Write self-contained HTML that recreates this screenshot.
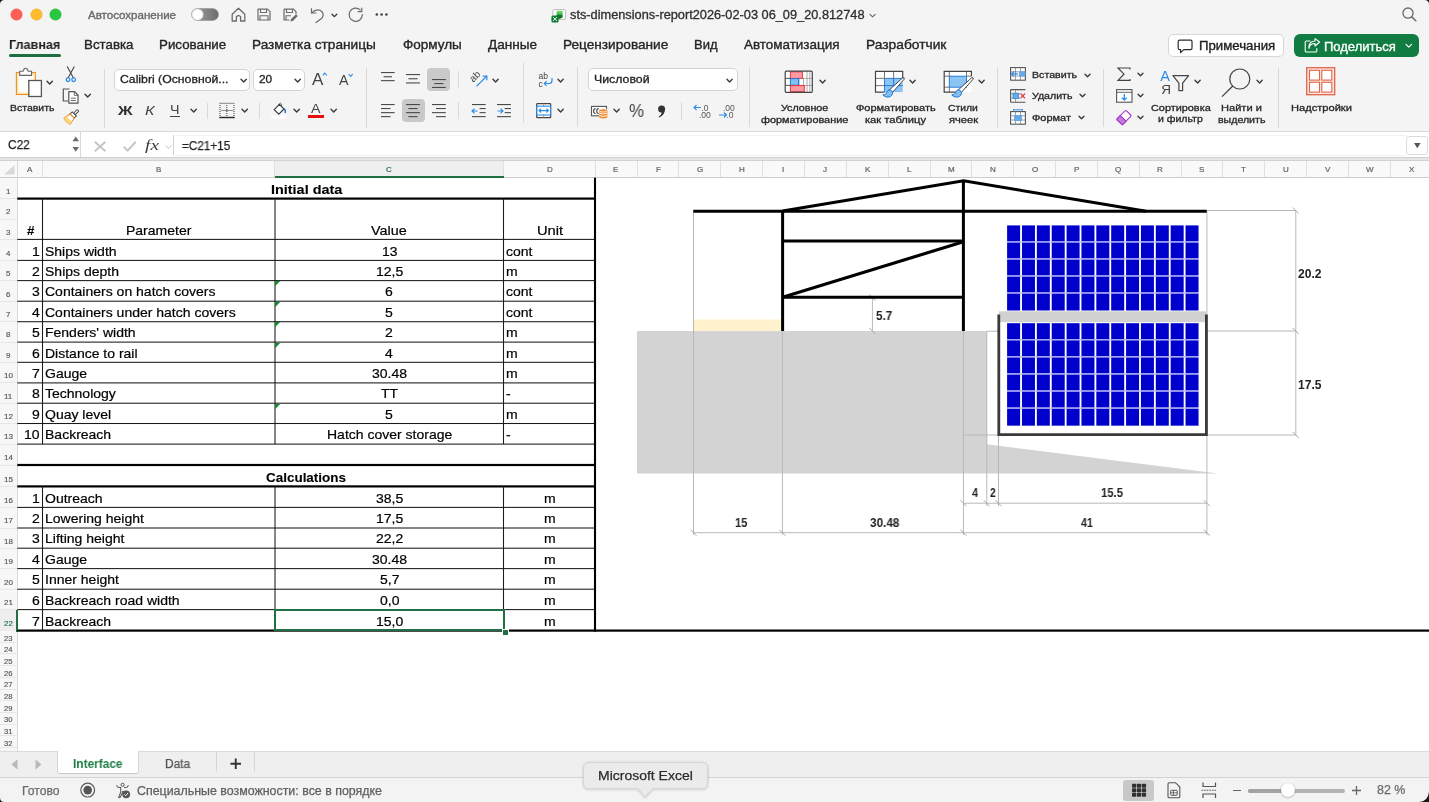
<!DOCTYPE html>
<html><head><meta charset="utf-8"><title>Excel</title>
<style>
html,body{margin:0;padding:0;}
body{width:1429px;height:802px;overflow:hidden;position:relative;background:#f4f4f4;font-family:'Liberation Sans',sans-serif;}
svg{display:block;will-change:transform;}
</style></head><body>
<div style="position:absolute;left:0.00px;top:0.00px;width:1429.00px;height:131.00px;background:#f4f4f4;"></div>
<svg style="position:absolute;left:10.00px;top:8.10px;overflow:visible;" width="13.00" height="13.00" viewBox="0 0 13.00 13.00"><circle cx="6.5" cy="6.5" r="5.7" fill="#ff5f57" stroke="#e2463f" stroke-width="0.4"/></svg>
<svg style="position:absolute;left:29.50px;top:8.10px;overflow:visible;" width="13.00" height="13.00" viewBox="0 0 13.00 13.00"><circle cx="6.5" cy="6.5" r="5.7" fill="#febc2e" stroke="#e1a116" stroke-width="0.4"/></svg>
<svg style="position:absolute;left:49.00px;top:8.10px;overflow:visible;" width="13.00" height="13.00" viewBox="0 0 13.00 13.00"><circle cx="6.5" cy="6.5" r="5.7" fill="#28c840" stroke="#14ae2a" stroke-width="0.4"/></svg>
<div style="position:absolute;left:87.50px;top:9.61px;white-space:pre;font-family:'Liberation Sans',sans-serif;font-size:10.5px;line-height:1;will-change:transform;font-weight:400;font-style:normal;color:#6a6a6a;transform:scaleX(1.0994);transform-origin:0 0;-webkit-text-stroke:0.35px #6a6a6a;z-index:5">Автосохранение</div>
<svg style="position:absolute;left:190.50px;top:8.00px;overflow:visible;" width="28.00" height="13.00" viewBox="0 0 28.00 13.00"><defs><linearGradient id="tg" x1="0" x2="1"><stop offset="0" stop-color="#a5a5a5"/><stop offset="1" stop-color="#6c6c6c"/></linearGradient></defs><rect x="0.5" y="0.5" width="27" height="12" rx="6" fill="url(#tg)" stroke="#8a8a8a" stroke-width="0.5"/><circle cx="6.6" cy="6.5" r="5.6" fill="#fff" stroke="#cfcfcf" stroke-width="0.5"/></svg>
<svg style="position:absolute;left:230.50px;top:6.50px;overflow:visible;" width="15.00" height="15.00" viewBox="0 0 15.00 15.00"><path d="M1.2 7.2 L7.5 1.2 L13.8 7.2 L13.8 14 L9.6 14 L9.6 9.6 Q7.5 7.6 5.4 9.6 L5.4 14 L1.2 14 Z" fill="none" stroke="#6b6b6b" stroke-width="1.3" stroke-linejoin="round"/></svg>
<svg style="position:absolute;left:257.00px;top:8.30px;overflow:visible;" width="14.00" height="13.00" viewBox="0 0 14.00 13.00"><path d="M1 1.2 L10.5 1.2 L13 3.7 L13 12 L1 12 Z" fill="none" stroke="#6b6b6b" stroke-width="1.2" stroke-linejoin="round"/><path d="M3.5 1.2 V4.5 H9.5 V1.2 M3 12 V7.8 H11 V12" fill="none" stroke="#6b6b6b" stroke-width="1.1"/></svg>
<svg style="position:absolute;left:283.20px;top:8.30px;overflow:visible;" width="15.00" height="14.00" viewBox="0 0 15.00 14.00"><path d="M1 1.2 L10.5 1.2 L13 3.7 L13 6 M6 12 L1 12 Z M1 1.2 V12" fill="none" stroke="#6b6b6b" stroke-width="1.2" stroke-linejoin="round"/><path d="M3.5 1.2 V4.5 H9.5 V1.2 M3 12 V7.8 H8" fill="none" stroke="#6b6b6b" stroke-width="1.1"/><path d="M7.5 13.5 L8 11 L13 6.2 L14.8 8 L9.9 12.9 Z" fill="#6b6b6b"/></svg>
<svg style="position:absolute;left:309.50px;top:6.50px;overflow:visible;" width="15.00" height="16.00" viewBox="0 0 15.00 16.00"><path d="M1.5 1.5 V6 H6" fill="none" stroke="#6b6b6b" stroke-width="1.2" stroke-linecap="round" stroke-linejoin="round"/><path d="M1.8 5.8 Q6 1.5 10.5 3.5 Q15 6.5 12 11 L6 15.5" fill="none" stroke="#6b6b6b" stroke-width="1.2" stroke-linecap="round"/></svg>
<svg style="position:absolute;left:331.30px;top:12.80px;overflow:visible;" width="6.80" height="4.80" viewBox="0 0 6.80 4.80"><path d="M1 1.20 L3.40 3.60 L5.80 1.20" fill="none" stroke="#333" stroke-width="1.30" stroke-linecap="round" stroke-linejoin="round"/></svg>
<svg style="position:absolute;left:347.50px;top:8.00px;overflow:visible;" width="16.00" height="14.00" viewBox="0 0 16.00 14.00"><path d="M14.3 6.7 A6.6 6.6 0 1 1 12.2 1.9" fill="none" stroke="#6b6b6b" stroke-width="1.2" stroke-linecap="round"/><path d="M10.1 3.7 H13.8 V0.1" fill="none" stroke="#6b6b6b" stroke-width="1.2" stroke-linecap="round" stroke-linejoin="round"/></svg>
<svg style="position:absolute;left:375.00px;top:13.00px;overflow:visible;" width="14.00" height="3.50" viewBox="0 0 14.00 3.50"><circle cx="1.8" cy="1.5" r="1.3" fill="#444"/><circle cx="6.6" cy="1.5" r="1.3" fill="#444"/><circle cx="11.4" cy="1.5" r="1.3" fill="#444"/></svg>
<svg style="position:absolute;left:0.00px;top:0.00px;overflow:visible;" width="1429.00" height="40.00" viewBox="0 0 1429.00 40.00"><defs><linearGradient id="xg" x1="0" y1="0" x2="0" y2="1"><stop offset="0" stop-color="#7be06a"/><stop offset="0.45" stop-color="#3cb84a"/><stop offset="0.55" stop-color="#0d7a2a"/><stop offset="1" stop-color="#09731f"/></linearGradient></defs><rect x="552.8" y="9.6" width="12.8" height="10" rx="1.6" fill="#fff" stroke="#b5b5b5" stroke-width="0.9"/><path d="M556.6 10.8 H562.6 V17.4 L559.6 18.9 L556.6 17.4 Z" fill="url(#xg)"/><rect x="551.4" y="15.5" width="7.2" height="7" rx="1.6" fill="#0e7a36"/><path d="M553 17.1 L557 21 M557 17.1 L553 21" stroke="#fff" stroke-width="0.9"/></svg>
<div style="position:absolute;left:570.00px;top:9.04px;white-space:pre;font-family:'Liberation Sans',sans-serif;font-size:12px;line-height:1;will-change:transform;font-weight:400;font-style:normal;color:#2f2f2f;transform:scaleX(1.0637);transform-origin:0 0;-webkit-text-stroke:0.30px #2f2f2f;z-index:5">sts-dimensions-report2026-02-03 06_09_20.812748</div>
<svg style="position:absolute;left:868.50px;top:12.70px;overflow:visible;" width="7.20" height="5.20" viewBox="0 0 7.20 5.20"><path d="M1 1.30 L3.60 3.90 L6.20 1.30" fill="none" stroke="#666" stroke-width="1.10" stroke-linecap="round" stroke-linejoin="round"/></svg>
<svg style="position:absolute;left:1400.00px;top:5.00px;overflow:visible;" width="20.00" height="20.00" viewBox="0 0 20.00 20.00"><circle cx="8" cy="8.1" r="5.1" fill="none" stroke="#6b6b6b" stroke-width="1.3"/><path d="M11.8 11.9 L15.8 15.7" stroke="#6b6b6b" stroke-width="1.5" stroke-linecap="round"/></svg>
<div style="position:absolute;left:9.20px;top:37.90px;white-space:pre;font-family:'Liberation Sans',sans-serif;font-size:13px;line-height:1;will-change:transform;font-weight:700;font-style:normal;color:#1e1e1e;transform:scaleX(0.9702);transform-origin:0 0;z-index:5">Главная</div>
<div style="position:absolute;left:84.00px;top:37.90px;white-space:pre;font-family:'Liberation Sans',sans-serif;font-size:13px;line-height:1;will-change:transform;font-weight:400;font-style:normal;color:#262626;transform:scaleX(1.0242);transform-origin:0 0;-webkit-text-stroke:0.35px #262626;z-index:5">Вставка</div>
<div style="position:absolute;left:158.70px;top:37.90px;white-space:pre;font-family:'Liberation Sans',sans-serif;font-size:13px;line-height:1;will-change:transform;font-weight:400;font-style:normal;color:#262626;transform:scaleX(1.0262);transform-origin:0 0;-webkit-text-stroke:0.35px #262626;z-index:5">Рисование</div>
<div style="position:absolute;left:252.40px;top:37.90px;white-space:pre;font-family:'Liberation Sans',sans-serif;font-size:13px;line-height:1;will-change:transform;font-weight:400;font-style:normal;color:#262626;transform:scaleX(1.0497);transform-origin:0 0;-webkit-text-stroke:0.35px #262626;z-index:5">Разметка страницы</div>
<div style="position:absolute;left:403.20px;top:37.90px;white-space:pre;font-family:'Liberation Sans',sans-serif;font-size:13px;line-height:1;will-change:transform;font-weight:400;font-style:normal;color:#262626;transform:scaleX(1.0393);transform-origin:0 0;-webkit-text-stroke:0.35px #262626;z-index:5">Формулы</div>
<div style="position:absolute;left:487.50px;top:37.90px;white-space:pre;font-family:'Liberation Sans',sans-serif;font-size:13px;line-height:1;will-change:transform;font-weight:400;font-style:normal;color:#262626;transform:scaleX(1.0432);transform-origin:0 0;-webkit-text-stroke:0.35px #262626;z-index:5">Данные</div>
<div style="position:absolute;left:562.90px;top:37.90px;white-space:pre;font-family:'Liberation Sans',sans-serif;font-size:13px;line-height:1;will-change:transform;font-weight:400;font-style:normal;color:#262626;transform:scaleX(1.0489);transform-origin:0 0;-webkit-text-stroke:0.35px #262626;z-index:5">Рецензирование</div>
<div style="position:absolute;left:694.30px;top:37.90px;white-space:pre;font-family:'Liberation Sans',sans-serif;font-size:13px;line-height:1;will-change:transform;font-weight:400;font-style:normal;color:#262626;-webkit-text-stroke:0.35px #262626;z-index:5">Вид</div>
<div style="position:absolute;left:743.70px;top:37.90px;white-space:pre;font-family:'Liberation Sans',sans-serif;font-size:13px;line-height:1;will-change:transform;font-weight:400;font-style:normal;color:#262626;transform:scaleX(1.0338);transform-origin:0 0;-webkit-text-stroke:0.35px #262626;z-index:5">Автоматизация</div>
<div style="position:absolute;left:865.60px;top:37.90px;white-space:pre;font-family:'Liberation Sans',sans-serif;font-size:13px;line-height:1;will-change:transform;font-weight:400;font-style:normal;color:#262626;transform:scaleX(1.0605);transform-origin:0 0;-webkit-text-stroke:0.35px #262626;z-index:5">Разработчик</div>
<div style="position:absolute;left:9.00px;top:54.20px;width:52.00px;height:2.80px;background:#1d6f42;border-radius:1.5px;"></div>
<div style="position:absolute;left:1168.30px;top:34.40px;width:115.40px;height:22.20px;background:#ffffff;box-sizing:border-box;border:1px solid #d6d6d6;border-radius:5px;"></div>
<svg style="position:absolute;left:1177.00px;top:39.00px;overflow:visible;" width="17.00" height="16.00" viewBox="0 0 17.00 16.00"><path d="M2.6 1.2 H13.6 Q15 1.2 15 2.6 V9.2 Q15 10.6 13.6 10.6 H6.8 L3.6 13.6 L3.6 10.6 H2.6 Q1.2 10.6 1.2 9.2 V2.6 Q1.2 1.2 2.6 1.2 Z" fill="none" stroke="#2b2b2b" stroke-width="1.2" stroke-linejoin="round"/></svg>
<div style="position:absolute;left:1199.30px;top:40.12px;white-space:pre;font-family:'Liberation Sans',sans-serif;font-size:12.5px;line-height:1;will-change:transform;font-weight:400;font-style:normal;color:#1e1e1e;transform:scaleX(1.0558);transform-origin:0 0;-webkit-text-stroke:0.35px #1e1e1e;z-index:5">Примечания</div>
<div style="position:absolute;left:1293.80px;top:34.30px;width:125.00px;height:22.70px;background:#107c41;border-radius:6px;"></div>
<svg style="position:absolute;left:1303.50px;top:38.00px;overflow:visible;" width="17.00" height="15.00" viewBox="0 0 17.00 15.00"><path d="M6 3 H2.5 Q1.2 3 1.2 4.3 V12.7 Q1.2 14 2.5 14 H11.5 Q12.8 14 12.8 12.7 V10.5" fill="none" stroke="#fff" stroke-width="1.1" stroke-linecap="round"/><path d="M5 10.5 Q5.5 5.5 11 5.5 V8 L15.6 4 L11 0.6 V3 Q4.2 3.4 5 10.5 Z" fill="none" stroke="#fff" stroke-width="1.1" stroke-linejoin="round"/></svg>
<div style="position:absolute;left:1324.30px;top:39.80px;white-space:pre;font-family:'Liberation Sans',sans-serif;font-size:13px;line-height:1;will-change:transform;font-weight:400;font-style:normal;color:#ffffff;-webkit-text-stroke:0.35px #ffffff;z-index:5">Поделиться</div>
<svg style="position:absolute;left:1404.50px;top:43.20px;overflow:visible;" width="7.60" height="5.60" viewBox="0 0 7.60 5.60"><path d="M1 1.40 L3.80 4.20 L6.60 1.40" fill="none" stroke="#ffffff" stroke-width="1.20" stroke-linecap="round" stroke-linejoin="round"/></svg>
<svg style="position:absolute;left:0.00px;top:0.00px;overflow:visible;" width="1429.00" height="200.00" viewBox="0 0 1429.00 200.00"><rect x="16.4" y="72.6" width="18.9" height="21.9" fill="#fff" stroke="#f08a24" stroke-width="1.1"/><rect x="17.6" y="73.8" width="16.5" height="19.5" fill="none" stroke="#fde3a0" stroke-width="1.3"/><path d="M19.7 75.4 V71.2 H23.2 Q23.8 68.2 25.6 68.2 Q27.5 68.2 28.1 71.2 H31.6 V75.4 Z" fill="#fff" stroke="#666" stroke-width="1.1" stroke-linejoin="round"/><rect x="28.8" y="80.5" width="12.6" height="16" fill="#fff" stroke="#555" stroke-width="1.3"/></svg>
<svg style="position:absolute;left:46.20px;top:79.50px;overflow:visible;" width="7.40" height="5.40" viewBox="0 0 7.40 5.40"><path d="M1 1.35 L3.70 4.05 L6.40 1.35" fill="none" stroke="#3a3a3a" stroke-width="1.40" stroke-linecap="round" stroke-linejoin="round"/></svg>
<div style="position:absolute;left:10.40px;top:103.16px;white-space:pre;font-family:'Liberation Sans',sans-serif;font-size:9.5px;line-height:1;will-change:transform;font-weight:400;font-style:normal;color:#262626;transform:scaleX(1.1047);transform-origin:0 0;-webkit-text-stroke:0.30px #262626;z-index:5">Вставить</div>
<svg style="position:absolute;left:64.50px;top:66.00px;overflow:visible;" width="12.00" height="16.50" viewBox="0 0 12.00 16.50"><path d="M2.2 0.5 L8.6 12.2 M9.3 0.5 L2.9 12.2" stroke="#444" stroke-width="1.1" fill="none"/><circle cx="3" cy="13.7" r="1.8" fill="#fff" stroke="#2f8ce0" stroke-width="1.3"/><circle cx="8.6" cy="13.7" r="1.8" fill="#fff" stroke="#2f8ce0" stroke-width="1.3"/></svg>
<svg style="position:absolute;left:62.00px;top:87.50px;overflow:visible;" width="17.50" height="16.00" viewBox="0 0 17.50 16.00"><path d="M7.5 1 H1.3 V13 H6" fill="none" stroke="#555" stroke-width="1.2"/><path d="M6.8 3.6 H12.6 L16 7 V15.2 H6.8 Z" fill="#fff" stroke="#555" stroke-width="1.2" stroke-linejoin="round"/><path d="M12.3 3.6 V7.3 H16 M8.8 10.2 H13.8 M8.8 12.5 H13.8" fill="none" stroke="#555" stroke-width="0.9"/></svg>
<svg style="position:absolute;left:83.80px;top:92.80px;overflow:visible;" width="7.40" height="5.40" viewBox="0 0 7.40 5.40"><path d="M1 1.35 L3.70 4.05 L6.40 1.35" fill="none" stroke="#3a3a3a" stroke-width="1.40" stroke-linecap="round" stroke-linejoin="round"/></svg>
<svg style="position:absolute;left:0.00px;top:0.00px;overflow:visible;" width="1429.00" height="200.00" viewBox="0 0 1429.00 200.00"><g transform="translate(71 117.2) rotate(45) scale(0.86)"><rect x="-1.3" y="-11.6" width="2.6" height="6.2" rx="1" fill="#fff" stroke="#3d3d3d" stroke-width="1.1"/><rect x="-3.4" y="-5.4" width="6.8" height="3.6" fill="#fff" stroke="#3d3d3d" stroke-width="1.1"/><path d="M-3.4 -1.8 H3.4 L5 6.6 Q0 8.4 -5 6.6 Z" fill="#fff" stroke="#f08a24" stroke-width="1.2" stroke-linejoin="round"/><path d="M-4.2 3.2 L4.3 3.2 L5 6.6 Q0 8.4 -5 6.6 Z" fill="#fbd77a"/></g></svg>
<div style="position:absolute;left:103.50px;top:68.50px;width:1.00px;height:59.50px;background:#d9d9d9;"></div>
<div style="position:absolute;left:113.70px;top:68.50px;width:136.50px;height:22.80px;background:#ffffff;box-sizing:border-box;border:1px solid #d4d4d4;border-radius:5px;"></div>
<div style="position:absolute;left:119.80px;top:74.27px;white-space:pre;font-family:'Liberation Sans',sans-serif;font-size:11.5px;line-height:1;will-change:transform;font-weight:400;font-style:normal;color:#1f1f1f;transform:scaleX(1.0644);transform-origin:0 0;-webkit-text-stroke:0.30px #1f1f1f;z-index:5">Calibri (Основной...</div>
<svg style="position:absolute;left:239.50px;top:77.70px;overflow:visible;" width="7.40" height="5.40" viewBox="0 0 7.40 5.40"><path d="M1 1.35 L3.70 4.05 L6.40 1.35" fill="none" stroke="#3a3a3a" stroke-width="1.40" stroke-linecap="round" stroke-linejoin="round"/></svg>
<div style="position:absolute;left:252.60px;top:68.50px;width:52.60px;height:22.80px;background:#ffffff;box-sizing:border-box;border:1px solid #d4d4d4;border-radius:5px;"></div>
<div style="position:absolute;left:258.80px;top:74.07px;white-space:pre;font-family:'Liberation Sans',sans-serif;font-size:11.5px;line-height:1;will-change:transform;font-weight:400;font-style:normal;color:#1f1f1f;transform:scaleX(1.0315);transform-origin:0 0;-webkit-text-stroke:0.30px #1f1f1f;z-index:5">20</div>
<svg style="position:absolute;left:294.30px;top:77.70px;overflow:visible;" width="7.40" height="5.40" viewBox="0 0 7.40 5.40"><path d="M1 1.35 L3.70 4.05 L6.40 1.35" fill="none" stroke="#3a3a3a" stroke-width="1.40" stroke-linecap="round" stroke-linejoin="round"/></svg>
<div style="position:absolute;left:311.50px;top:70.61px;white-space:pre;font-family:'Liberation Sans',sans-serif;font-size:17px;line-height:1;will-change:transform;font-weight:400;font-style:normal;color:#444;transform:scaleX(0.9697);transform-origin:0 0;z-index:5">A</div>
<svg style="position:absolute;left:322.00px;top:72.00px;overflow:visible;" width="5.50" height="4.00" viewBox="0 0 5.50 4.00"><path d="M0.7 3.3 L2.75 1 L4.8 3.3" fill="none" stroke="#2b8ce6" stroke-width="1.1"/></svg>
<div style="position:absolute;left:339.00px;top:73.35px;white-space:pre;font-family:'Liberation Sans',sans-serif;font-size:14px;line-height:1;will-change:transform;font-weight:400;font-style:normal;color:#444;transform:scaleX(1.0167);transform-origin:0 0;z-index:5">A</div>
<svg style="position:absolute;left:348.00px;top:72.50px;overflow:visible;" width="5.50" height="4.00" viewBox="0 0 5.50 4.00"><path d="M0.7 1 L2.75 3.3 L4.8 1" fill="none" stroke="#2b8ce6" stroke-width="1.1"/></svg>
<div style="position:absolute;left:365.80px;top:68.00px;width:1.00px;height:59.50px;background:#d9d9d9;"></div>
<div style="position:absolute;left:117.50px;top:103.57px;white-space:pre;font-family:'Liberation Sans',sans-serif;font-size:13.5px;line-height:1;will-change:transform;font-weight:700;font-style:normal;color:#2d2d2d;transform:scaleX(1.1882);transform-origin:0 0;z-index:5">Ж</div>
<div style="position:absolute;left:145.00px;top:103.57px;white-space:pre;font-family:'Liberation Sans',sans-serif;font-size:13.5px;line-height:1;will-change:transform;font-weight:400;font-style:italic;color:#444;transform:scaleX(1.1922);transform-origin:0 0;z-index:5">К</div>
<div style="position:absolute;left:170.30px;top:103.62px;white-space:pre;font-family:'Liberation Sans',sans-serif;font-size:12.5px;line-height:1;will-change:transform;font-weight:400;font-style:normal;color:#444;transform:scaleX(1.1386);transform-origin:0 0;z-index:5">Ч</div>
<div style="position:absolute;left:170.20px;top:116.30px;width:10.30px;height:1.10px;background:#444;"></div>
<svg style="position:absolute;left:189.60px;top:108.30px;overflow:visible;" width="7.40" height="5.40" viewBox="0 0 7.40 5.40"><path d="M1 1.35 L3.70 4.05 L6.40 1.35" fill="none" stroke="#3a3a3a" stroke-width="1.40" stroke-linecap="round" stroke-linejoin="round"/></svg>
<div style="position:absolute;left:206.80px;top:102.60px;width:1.00px;height:16.40px;background:#d9d9d9;"></div>
<svg style="position:absolute;left:0.00px;top:0.00px;overflow:visible;" width="1429.00" height="200.00" viewBox="0 0 1429.00 200.00"><rect x="219.2" y="102.8" width="15.6" height="1" fill="#888"/><rect x="219.2" y="105.0" width="1.5" height="0.9" fill="#666"/><rect x="219.2" y="107.0" width="1.5" height="0.9" fill="#666"/><rect x="219.2" y="109.0" width="1.5" height="0.9" fill="#666"/><rect x="219.2" y="111.0" width="1.5" height="0.9" fill="#666"/><rect x="219.2" y="113.0" width="1.5" height="0.9" fill="#666"/><rect x="219.2" y="115.0" width="1.5" height="0.9" fill="#666"/><rect x="225.9" y="105.0" width="1.5" height="0.9" fill="#666"/><rect x="225.9" y="107.0" width="1.5" height="0.9" fill="#666"/><rect x="225.9" y="109.0" width="1.5" height="0.9" fill="#666"/><rect x="225.9" y="111.0" width="1.5" height="0.9" fill="#666"/><rect x="225.9" y="113.0" width="1.5" height="0.9" fill="#666"/><rect x="225.9" y="115.0" width="1.5" height="0.9" fill="#666"/><rect x="233.2" y="105.0" width="1.5" height="0.9" fill="#666"/><rect x="233.2" y="107.0" width="1.5" height="0.9" fill="#666"/><rect x="233.2" y="109.0" width="1.5" height="0.9" fill="#666"/><rect x="233.2" y="111.0" width="1.5" height="0.9" fill="#666"/><rect x="233.2" y="113.0" width="1.5" height="0.9" fill="#666"/><rect x="233.2" y="115.0" width="1.5" height="0.9" fill="#666"/><rect x="221" y="110" width="12" height="0.9" fill="#888"/><rect x="226" y="109.2" width="1.5" height="2.5" fill="#777"/><rect x="219.2" y="116.7" width="15.6" height="1.5" rx="0.5" fill="#2d2d2d"/></svg>
<svg style="position:absolute;left:241.30px;top:108.30px;overflow:visible;" width="7.40" height="5.40" viewBox="0 0 7.40 5.40"><path d="M1 1.35 L3.70 4.05 L6.40 1.35" fill="none" stroke="#3a3a3a" stroke-width="1.40" stroke-linecap="round" stroke-linejoin="round"/></svg>
<div style="position:absolute;left:258.80px;top:102.60px;width:1.00px;height:16.40px;background:#d9d9d9;"></div>
<svg style="position:absolute;left:0.00px;top:0.00px;overflow:visible;" width="1429.00" height="200.00" viewBox="0 0 1429.00 200.00"><path d="M274.2 109.6 L279.4 104.4 L284 109 L278.8 114.2 Z" fill="#fff" stroke="#333" stroke-width="1.1" stroke-linejoin="round"/><path d="M278.1 105.7 L279.6 103.5 Q280.6 102.6 281.2 103.8 L281.6 107" fill="none" stroke="#555" stroke-width="0.9"/><path d="M283.6 108.6 Q285.6 109 285.3 112.6" fill="none" stroke="#1b6fd0" stroke-width="1.4" stroke-linecap="round"/><rect x="271.2" y="115.4" width="15.2" height="3" fill="#ffffff"/></svg>
<svg style="position:absolute;left:292.60px;top:108.30px;overflow:visible;" width="7.40" height="5.40" viewBox="0 0 7.40 5.40"><path d="M1 1.35 L3.70 4.05 L6.40 1.35" fill="none" stroke="#3a3a3a" stroke-width="1.40" stroke-linecap="round" stroke-linejoin="round"/></svg>
<div style="position:absolute;left:311.20px;top:102.17px;white-space:pre;font-family:'Liberation Sans',sans-serif;font-size:13.5px;line-height:1;will-change:transform;font-weight:400;font-style:normal;color:#444;transform:scaleX(1.0537);transform-origin:0 0;z-index:5">A</div>
<div style="position:absolute;left:308.00px;top:115.10px;width:15.50px;height:3.40px;background:#e8100f;"></div>
<svg style="position:absolute;left:329.50px;top:108.30px;overflow:visible;" width="7.40" height="5.40" viewBox="0 0 7.40 5.40"><path d="M1 1.35 L3.70 4.05 L6.40 1.35" fill="none" stroke="#3a3a3a" stroke-width="1.40" stroke-linecap="round" stroke-linejoin="round"/></svg>
<svg style="position:absolute;left:381.00px;top:71.65px;overflow:visible;" width="13.70" height="9.20" viewBox="0 0 13.70 9.20"><rect x="0.00" y="0.00" width="13.70" height="1.1" fill="#4a4a4a"/><rect x="2.60" y="4.20" width="8.40" height="1.1" fill="#4a4a4a"/><rect x="0.00" y="8.10" width="13.70" height="1.1" fill="#4a4a4a"/></svg>
<svg style="position:absolute;left:406.20px;top:74.45px;overflow:visible;" width="14.00" height="9.50" viewBox="0 0 14.00 9.50"><rect x="0.00" y="0.00" width="14.00" height="1.1" fill="#4a4a4a"/><rect x="2.40" y="4.20" width="9.20" height="1.1" fill="#4a4a4a"/><rect x="0.00" y="8.40" width="14.00" height="1.1" fill="#4a4a4a"/></svg>
<div style="position:absolute;left:426.70px;top:68.20px;width:23.30px;height:23.30px;background:#c9c9c9;border-radius:4px;"></div>
<svg style="position:absolute;left:431.60px;top:78.65px;overflow:visible;" width="13.80" height="9.00" viewBox="0 0 13.80 9.00"><rect x="0.00" y="0.00" width="13.80" height="1.1" fill="#4a4a4a"/><rect x="2.40" y="4.00" width="9.00" height="1.1" fill="#4a4a4a"/><rect x="0.00" y="7.90" width="13.80" height="1.1" fill="#4a4a4a"/></svg>
<div style="position:absolute;left:458.00px;top:71.30px;width:1.00px;height:16.70px;background:#d9d9d9;"></div>
<svg style="position:absolute;left:469.50px;top:70.00px;overflow:visible;" width="18.00" height="18.00" viewBox="0 0 18.00 18.00"><text x="0" y="0" transform="translate(3.2 12.8) rotate(-45)" font-family="Liberation Sans" font-size="10" fill="#444">ab</text><path d="M6.5 16.3 L16.8 6" stroke="#2b8ce6" stroke-width="1.2"/><path d="M12.8 6.2 H16.8 V10.2" fill="none" stroke="#2b8ce6" stroke-width="1.2"/></svg>
<svg style="position:absolute;left:492.20px;top:77.60px;overflow:visible;" width="7.20" height="5.20" viewBox="0 0 7.20 5.20"><path d="M1 1.30 L3.60 3.90 L6.20 1.30" fill="none" stroke="#3a3a3a" stroke-width="1.40" stroke-linecap="round" stroke-linejoin="round"/></svg>
<svg style="position:absolute;left:381.00px;top:103.85px;overflow:visible;" width="13.70" height="13.20" viewBox="0 0 13.70 13.20"><rect x="0.00" y="0.00" width="13.70" height="1.1" fill="#4a4a4a"/><rect x="0.00" y="4.00" width="9.50" height="1.1" fill="#4a4a4a"/><rect x="0.00" y="8.10" width="13.70" height="1.1" fill="#4a4a4a"/><rect x="0.00" y="12.10" width="9.50" height="1.1" fill="#4a4a4a"/></svg>
<div style="position:absolute;left:401.50px;top:99.20px;width:23.10px;height:23.10px;background:#c9c9c9;border-radius:4px;"></div>
<svg style="position:absolute;left:406.20px;top:103.85px;overflow:visible;" width="14.00" height="13.20" viewBox="0 0 14.00 13.20"><rect x="0.00" y="0.00" width="14.00" height="1.1" fill="#4a4a4a"/><rect x="2.40" y="4.00" width="9.20" height="1.1" fill="#4a4a4a"/><rect x="0.00" y="8.10" width="14.00" height="1.1" fill="#4a4a4a"/><rect x="2.40" y="12.10" width="9.20" height="1.1" fill="#4a4a4a"/></svg>
<svg style="position:absolute;left:431.60px;top:103.85px;overflow:visible;" width="13.80" height="13.20" viewBox="0 0 13.80 13.20"><rect x="0.00" y="0.00" width="13.80" height="1.1" fill="#4a4a4a"/><rect x="4.00" y="4.00" width="9.80" height="1.1" fill="#4a4a4a"/><rect x="0.00" y="8.10" width="13.80" height="1.1" fill="#4a4a4a"/><rect x="4.00" y="12.10" width="9.80" height="1.1" fill="#4a4a4a"/></svg>
<div style="position:absolute;left:458.00px;top:102.30px;width:1.00px;height:16.80px;background:#d9d9d9;"></div>
<svg style="position:absolute;left:471.60px;top:103.85px;overflow:visible;" width="13.70" height="13.20" viewBox="0 0 13.70 13.20"><rect x="0.00" y="0.00" width="13.70" height="1.1" fill="#4a4a4a"/><rect x="7.60" y="4.00" width="6.10" height="1.1" fill="#4a4a4a"/><rect x="7.60" y="8.10" width="6.10" height="1.1" fill="#4a4a4a"/><rect x="0.00" y="12.10" width="13.70" height="1.1" fill="#4a4a4a"/></svg>
<svg style="position:absolute;left:471.00px;top:107.50px;overflow:visible;" width="7.00" height="6.00" viewBox="0 0 7.00 6.00"><path d="M6.5 3 H1 M3.5 0.6 L1 3 L3.5 5.4" fill="none" stroke="#2b8ce6" stroke-width="1.2"/></svg>
<svg style="position:absolute;left:496.80px;top:103.85px;overflow:visible;" width="13.90" height="13.20" viewBox="0 0 13.90 13.20"><rect x="0.00" y="0.00" width="13.90" height="1.1" fill="#4a4a4a"/><rect x="7.70" y="4.00" width="6.20" height="1.1" fill="#4a4a4a"/><rect x="7.70" y="8.10" width="6.20" height="1.1" fill="#4a4a4a"/><rect x="0.00" y="12.10" width="13.90" height="1.1" fill="#4a4a4a"/></svg>
<svg style="position:absolute;left:496.50px;top:107.50px;overflow:visible;" width="7.00" height="6.00" viewBox="0 0 7.00 6.00"><path d="M0.5 3 H6 M3.5 0.6 L6 3 L3.5 5.4" fill="none" stroke="#2b8ce6" stroke-width="1.2"/></svg>
<div style="position:absolute;left:523.40px;top:63.20px;width:1.00px;height:59.80px;background:#d9d9d9;"></div>
<svg style="position:absolute;left:537.50px;top:72.00px;overflow:visible;" width="15.00" height="16.00" viewBox="0 0 15.00 16.00"><text x="0.5" y="7" font-family="Liberation Sans" font-size="8.5" fill="#444">ab</text><text x="0.5" y="14.5" font-family="Liberation Sans" font-size="8.5" fill="#444">c</text><path d="M6.5 11.5 H11 Q14 11.5 14 8.5 V6" fill="none" stroke="#2b8ce6" stroke-width="1.2"/><path d="M8.6 9.2 L6.3 11.5 L8.6 13.8" fill="none" stroke="#2b8ce6" stroke-width="1.2"/></svg>
<svg style="position:absolute;left:557.40px;top:77.60px;overflow:visible;" width="7.20" height="5.20" viewBox="0 0 7.20 5.20"><path d="M1 1.30 L3.60 3.90 L6.20 1.30" fill="none" stroke="#3a3a3a" stroke-width="1.40" stroke-linecap="round" stroke-linejoin="round"/></svg>
<svg style="position:absolute;left:535.50px;top:102.80px;overflow:visible;" width="15.50" height="15.50" viewBox="0 0 15.50 15.50"><rect x="0.7" y="0.7" width="14" height="14" rx="0.8" fill="#fff" stroke="#444" stroke-width="1.2"/><rect x="0.9" y="3.2" width="13.6" height="8.8" fill="#fff" stroke="#2b8ce6" stroke-width="1.1"/><path d="M7.7 0.7 V3.2 M7.7 12 V14.7" stroke="#888" stroke-width="0.8"/><path d="M3 7.6 H12.4 M5 5.7 L3 7.6 L5 9.5 M10.4 5.7 L12.4 7.6 L10.4 9.5" fill="none" stroke="#2b8ce6" stroke-width="1.1"/></svg>
<svg style="position:absolute;left:557.40px;top:108.40px;overflow:visible;" width="7.20" height="5.20" viewBox="0 0 7.20 5.20"><path d="M1 1.30 L3.60 3.90 L6.20 1.30" fill="none" stroke="#3a3a3a" stroke-width="1.40" stroke-linecap="round" stroke-linejoin="round"/></svg>
<div style="position:absolute;left:576.90px;top:67.40px;width:1.00px;height:59.90px;background:#d9d9d9;"></div>
<div style="position:absolute;left:587.70px;top:68.00px;width:150.70px;height:23.20px;background:#ffffff;box-sizing:border-box;border:1px solid #d4d4d4;border-radius:5px;"></div>
<div style="position:absolute;left:593.60px;top:74.47px;white-space:pre;font-family:'Liberation Sans',sans-serif;font-size:11.5px;line-height:1;will-change:transform;font-weight:400;font-style:normal;color:#1f1f1f;transform:scaleX(1.0718);transform-origin:0 0;-webkit-text-stroke:0.30px #1f1f1f;z-index:5">Числовой</div>
<svg style="position:absolute;left:726.40px;top:77.60px;overflow:visible;" width="7.20" height="5.20" viewBox="0 0 7.20 5.20"><path d="M1 1.30 L3.60 3.90 L6.20 1.30" fill="none" stroke="#3a3a3a" stroke-width="1.40" stroke-linecap="round" stroke-linejoin="round"/></svg>
<svg style="position:absolute;left:0.00px;top:0.00px;overflow:visible;" width="1429.00" height="200.00" viewBox="0 0 1429.00 200.00"><rect x="591.5" y="106.4" width="15" height="9.4" fill="#fff" stroke="#555" stroke-width="1.1"/><path d="M595.5 108.6 Q593.6 108.6 593.6 111.1 Q593.6 113.6 595.5 113.6 M598.6 108.6 Q596.7 108.6 596.7 111.1 Q596.7 113.6 598.6 113.6" fill="none" stroke="#444" stroke-width="1.1"/><path d="M599 110.3 H607.4 V117.6 Q603.2 119.6 599 117.6 Z" fill="#f28a2e"/><ellipse cx="603.2" cy="110.4" rx="4.2" ry="1.6" fill="#f28a2e" stroke="#fff" stroke-width="0.8"/><path d="M599 113 Q603.2 115 607.4 113 M599 115.5 Q603.2 117.5 607.4 115.5" fill="none" stroke="#fff" stroke-width="0.9"/></svg>
<svg style="position:absolute;left:613.10px;top:108.40px;overflow:visible;" width="7.20" height="5.20" viewBox="0 0 7.20 5.20"><path d="M1 1.30 L3.60 3.90 L6.20 1.30" fill="none" stroke="#3a3a3a" stroke-width="1.40" stroke-linecap="round" stroke-linejoin="round"/></svg>
<div style="position:absolute;left:628.50px;top:102.99px;white-space:pre;font-family:'Liberation Sans',sans-serif;font-size:17.5px;line-height:1;will-change:transform;font-weight:400;font-style:normal;color:#444;transform:scaleX(0.9639);transform-origin:0 0;z-index:5">%</div>
<svg style="position:absolute;left:657.00px;top:104.50px;overflow:visible;" width="9.50" height="13.00" viewBox="0 0 9.50 13.00"><circle cx="4.6" cy="3.9" r="3.5" fill="#333"/><path d="M7.6 4.5 Q8.2 9.8 2.2 12.6 L1.8 11.6 Q5 9.5 4.6 6.8 Z" fill="#333"/></svg>
<div style="position:absolute;left:680.80px;top:102.00px;width:1.00px;height:18.00px;background:#d9d9d9;"></div>
<svg style="position:absolute;left:692.80px;top:102.50px;overflow:visible;" width="17.00" height="16.00" viewBox="0 0 17.00 16.00"><text x="8.5" y="7.5" font-family="Liberation Sans" font-size="8.5" fill="#555">.0</text><text x="6" y="15" font-family="Liberation Sans" font-size="8.5" fill="#555">.00</text><path d="M8 4.5 H1 M3.5 2 L1 4.5 L3.5 7" fill="none" stroke="#2b8ce6" stroke-width="1.1"/></svg>
<svg style="position:absolute;left:718.00px;top:102.50px;overflow:visible;" width="17.00" height="16.00" viewBox="0 0 17.00 16.00"><text x="5" y="7.5" font-family="Liberation Sans" font-size="8.5" fill="#555">.00</text><text x="8.5" y="15" font-family="Liberation Sans" font-size="8.5" fill="#555">.0</text><path d="M1 12 H8.5 M6 9.5 L8.5 12 L6 14.5" fill="none" stroke="#2b8ce6" stroke-width="1.1"/></svg>
<div style="position:absolute;left:748.50px;top:67.40px;width:1.00px;height:59.90px;background:#d9d9d9;"></div>
<svg style="position:absolute;left:0.00px;top:0.00px;overflow:visible;" width="1429.00" height="200.00" viewBox="0 0 1429.00 200.00"><rect x="785.2" y="71.2" width="27.1" height="21.1" fill="#fff"/><path d="M785.2 78.4 H812.3 M785.2 85.4 H812.3 M807 71.2 V92.3 M809.8 71.2 V92.3 M799 78.4 V85.4 M803.5 78.4 V85.4" stroke="#8a8a8a" stroke-width="0.7"/><rect x="790.4" y="71.8" width="12" height="6.6" fill="#ff9aa3" stroke="#e8323c" stroke-width="1"/><rect x="790.4" y="78.6" width="8.2" height="6.6" fill="#80c0f2" stroke="#2277d8" stroke-width="1"/><rect x="790.4" y="85.6" width="13.9" height="6.1" fill="#ff9aa3" stroke="#e8323c" stroke-width="1"/><rect x="785.2" y="71.2" width="27.1" height="21.1" rx="1" fill="none" stroke="#444" stroke-width="1.2"/><path d="M785.2 78.4 H790.4 M785.2 85.4 H790.4" stroke="#555" stroke-width="0.9"/></svg>
<svg style="position:absolute;left:818.70px;top:79.00px;overflow:visible;" width="7.20" height="5.20" viewBox="0 0 7.20 5.20"><path d="M1 1.30 L3.60 3.90 L6.20 1.30" fill="none" stroke="#3a3a3a" stroke-width="1.40" stroke-linecap="round" stroke-linejoin="round"/></svg>
<div style="position:absolute;left:781.00px;top:103.26px;white-space:pre;font-family:'Liberation Sans',sans-serif;font-size:9.5px;line-height:1;will-change:transform;font-weight:400;font-style:normal;color:#262626;transform:scaleX(1.1274);transform-origin:0 0;-webkit-text-stroke:0.30px #262626;z-index:5">Условное</div>
<div style="position:absolute;left:761.00px;top:115.06px;white-space:pre;font-family:'Liberation Sans',sans-serif;font-size:9.5px;line-height:1;will-change:transform;font-weight:400;font-style:normal;color:#262626;transform:scaleX(1.1444);transform-origin:0 0;-webkit-text-stroke:0.30px #262626;z-index:5">форматирование</div>
<svg style="position:absolute;left:0.00px;top:0.00px;overflow:visible;" width="1429.00" height="200.00" viewBox="0 0 1429.00 200.00"><rect x="875.5" y="71.3" width="27.2" height="20.8" fill="#fff"/><rect x="884.5" y="78.4" width="18.2" height="13.7" fill="#8cc4f4"/><path d="M884.5 92.1 V78.4 H902.7 M893.6 78.4 V92.1 M884.5 85.6 H902.7" fill="none" stroke="#1a73d9" stroke-width="0.9"/><path d="M875.5 78.4 H884.5 M875.5 85.6 H884.5 M884.5 71.3 V78.4 M893.6 71.3 V78.4" stroke="#666" stroke-width="0.9"/><path d="M902.7 78.4 V71.3 H875.5 V92.1 H884.5" fill="none" stroke="#444" stroke-width="1.2"/><path d="M888.60 90.60 L902.60 77.90 Q904.80 77.00 904.20 79.20 L891.60 93.40 Z" fill="#fff" stroke="#333" stroke-width="0.9" stroke-linejoin="round"/><path d="M889.80 89.90 C893.60 90.60 893.40 95.60 889.60 96.80 C886.80 97.60 884.40 96.60 882.90 94.90 C885.30 95.00 886.30 93.60 886.80 92.20 C887.50 90.40 888.60 89.70 889.80 89.90 Z" fill="#85bff2" stroke="#1a73d9" stroke-width="1" stroke-linejoin="round"/></svg>
<svg style="position:absolute;left:908.80px;top:79.00px;overflow:visible;" width="7.20" height="5.20" viewBox="0 0 7.20 5.20"><path d="M1 1.30 L3.60 3.90 L6.20 1.30" fill="none" stroke="#3a3a3a" stroke-width="1.40" stroke-linecap="round" stroke-linejoin="round"/></svg>
<div style="position:absolute;left:856.00px;top:103.26px;white-space:pre;font-family:'Liberation Sans',sans-serif;font-size:9.5px;line-height:1;will-change:transform;font-weight:400;font-style:normal;color:#262626;transform:scaleX(1.1561);transform-origin:0 0;-webkit-text-stroke:0.30px #262626;z-index:5">Форматировать</div>
<div style="position:absolute;left:865.00px;top:115.06px;white-space:pre;font-family:'Liberation Sans',sans-serif;font-size:9.5px;line-height:1;will-change:transform;font-weight:400;font-style:normal;color:#262626;transform:scaleX(1.1724);transform-origin:0 0;-webkit-text-stroke:0.30px #262626;z-index:5">как таблицу</div>
<svg style="position:absolute;left:0.00px;top:0.00px;overflow:visible;" width="1429.00" height="200.00" viewBox="0 0 1429.00 200.00"><rect x="944.2" y="71.3" width="27.2" height="20.8" fill="#fff"/><rect x="949.3" y="76.2" width="17.2" height="11" fill="#8cc4f4" stroke="#1a73d9" stroke-width="0.9"/><path d="M944.2 76.2 H949.3 M966.5 76.2 H971.4 M944.2 87.2 H949.3 M949.3 71.3 V76.2 M966.5 71.3 V76.2 M949.3 87.2 V92.1" stroke="#666" stroke-width="0.9"/><path d="M971.4 76.2 V71.3 H944.2 V92.1 H957" fill="none" stroke="#444" stroke-width="1.2"/><path d="M957.50 90.60 L971.50 77.90 Q973.70 77.00 973.10 79.20 L960.50 93.40 Z" fill="#fff" stroke="#333" stroke-width="0.9" stroke-linejoin="round"/><path d="M958.70 89.90 C962.50 90.60 962.30 95.60 958.50 96.80 C955.70 97.60 953.30 96.60 951.80 94.90 C954.20 95.00 955.20 93.60 955.70 92.20 C956.40 90.40 957.50 89.70 958.70 89.90 Z" fill="#85bff2" stroke="#1a73d9" stroke-width="1" stroke-linejoin="round"/></svg>
<svg style="position:absolute;left:977.90px;top:79.00px;overflow:visible;" width="7.20" height="5.20" viewBox="0 0 7.20 5.20"><path d="M1 1.30 L3.60 3.90 L6.20 1.30" fill="none" stroke="#3a3a3a" stroke-width="1.40" stroke-linecap="round" stroke-linejoin="round"/></svg>
<div style="position:absolute;left:948.40px;top:103.26px;white-space:pre;font-family:'Liberation Sans',sans-serif;font-size:9.5px;line-height:1;will-change:transform;font-weight:400;font-style:normal;color:#262626;transform:scaleX(1.0922);transform-origin:0 0;-webkit-text-stroke:0.30px #262626;z-index:5">Стили</div>
<div style="position:absolute;left:948.80px;top:115.06px;white-space:pre;font-family:'Liberation Sans',sans-serif;font-size:9.5px;line-height:1;will-change:transform;font-weight:400;font-style:normal;color:#262626;transform:scaleX(1.1761);transform-origin:0 0;-webkit-text-stroke:0.30px #262626;z-index:5">ячеек</div>
<div style="position:absolute;left:997.00px;top:68.00px;width:1.00px;height:59.50px;background:#d9d9d9;"></div>
<svg style="position:absolute;left:1010.00px;top:67.20px;overflow:visible;" width="16.00" height="14.00" viewBox="0 0 16.00 14.00"><rect x="0.6" y="0.6" width="14.8" height="12.6" fill="#fff" stroke="#555" stroke-width="1.1"/><path d="M0.6 4.8 H15.4 M0.6 9 H15.4 M5.5 0.6 V13.2 M10.5 0.6 V13.2" stroke="#777" stroke-width="0.7"/><rect x="9" y="4.2" width="6.4" height="5.4" fill="#6aa9e6"/><path d="M8 6.9 H1.5 M4 4.5 L1.5 6.9 L4 9.3" fill="none" stroke="#2b8ce6" stroke-width="1.2"/></svg>
<div style="position:absolute;left:1032.30px;top:70.46px;white-space:pre;font-family:'Liberation Sans',sans-serif;font-size:9.5px;line-height:1;will-change:transform;font-weight:400;font-style:normal;color:#262626;transform:scaleX(1.1196);transform-origin:0 0;-webkit-text-stroke:0.30px #262626;z-index:5">Вставить</div>
<svg style="position:absolute;left:1083.50px;top:72.50px;overflow:visible;" width="7.00" height="5.00" viewBox="0 0 7.00 5.00"><path d="M1 1.25 L3.50 3.75 L6.00 1.25" fill="none" stroke="#3a3a3a" stroke-width="1.40" stroke-linecap="round" stroke-linejoin="round"/></svg>
<svg style="position:absolute;left:1010.00px;top:88.50px;overflow:visible;" width="16.00" height="14.00" viewBox="0 0 16.00 14.00"><path d="M0.6 0.6 H15.4 M0.6 13.2 H15.4 M0.6 0.6 V13.2" fill="none" stroke="#555" stroke-width="1.1"/><path d="M0.6 4.8 H10 M0.6 9 H10 M5.5 0.6 V13.2" stroke="#777" stroke-width="0.7"/><rect x="3" y="4.2" width="5.4" height="5.4" fill="#6aa9e6" stroke="#2b8ce6" stroke-width="0.8"/><path d="M10.5 4.5 L15 9.3 M15 4.5 L10.5 9.3" stroke="#e03a3a" stroke-width="1.2"/></svg>
<div style="position:absolute;left:1032.30px;top:91.26px;white-space:pre;font-family:'Liberation Sans',sans-serif;font-size:9.5px;line-height:1;will-change:transform;font-weight:400;font-style:normal;color:#262626;transform:scaleX(1.1163);transform-origin:0 0;-webkit-text-stroke:0.30px #262626;z-index:5">Удалить</div>
<svg style="position:absolute;left:1078.50px;top:93.00px;overflow:visible;" width="7.00" height="5.00" viewBox="0 0 7.00 5.00"><path d="M1 1.25 L3.50 3.75 L6.00 1.25" fill="none" stroke="#3a3a3a" stroke-width="1.40" stroke-linecap="round" stroke-linejoin="round"/></svg>
<svg style="position:absolute;left:1010.00px;top:108.50px;overflow:visible;" width="16.00" height="16.00" viewBox="0 0 16.00 16.00"><rect x="0.6" y="2.6" width="14.8" height="12.6" fill="#fff" stroke="#555" stroke-width="1.1"/><path d="M0.6 6.8 H15.4 M0.6 11 H15.4 M5.5 2.6 V15.2 M10.5 2.6 V15.2" stroke="#777" stroke-width="0.7"/><rect x="4" y="6" width="8" height="6" fill="#6aa9e6"/><path d="M3.5 0.8 H12.5 M3.5 0 V1.6 M12.5 0 V1.6" stroke="#2b8ce6" stroke-width="1"/></svg>
<div style="position:absolute;left:1032.30px;top:112.86px;white-space:pre;font-family:'Liberation Sans',sans-serif;font-size:9.5px;line-height:1;will-change:transform;font-weight:400;font-style:normal;color:#262626;transform:scaleX(1.1526);transform-origin:0 0;-webkit-text-stroke:0.30px #262626;z-index:5">Формат</div>
<svg style="position:absolute;left:1077.70px;top:114.50px;overflow:visible;" width="7.00" height="5.00" viewBox="0 0 7.00 5.00"><path d="M1 1.25 L3.50 3.75 L6.00 1.25" fill="none" stroke="#3a3a3a" stroke-width="1.40" stroke-linecap="round" stroke-linejoin="round"/></svg>
<div style="position:absolute;left:1103.00px;top:68.80px;width:1.00px;height:58.50px;background:#d9d9d9;"></div>
<svg style="position:absolute;left:1117.00px;top:67.00px;overflow:visible;" width="14.00" height="14.50" viewBox="0 0 14.00 14.50"><path d="M13 2.5 V1 H1 L7 7.2 L1 13.4 H13 V11.9" fill="none" stroke="#444" stroke-width="1.2" stroke-linejoin="miter"/></svg>
<svg style="position:absolute;left:1136.50px;top:72.00px;overflow:visible;" width="7.00" height="5.00" viewBox="0 0 7.00 5.00"><path d="M1 1.25 L3.50 3.75 L6.00 1.25" fill="none" stroke="#3a3a3a" stroke-width="1.40" stroke-linecap="round" stroke-linejoin="round"/></svg>
<svg style="position:absolute;left:1115.50px;top:88.50px;overflow:visible;" width="17.00" height="14.00" viewBox="0 0 17.00 14.00"><rect x="0.6" y="0.6" width="15.4" height="12.6" fill="#fff" stroke="#555" stroke-width="1.1"/><path d="M0.6 3.3 H16" stroke="#555" stroke-width="0.9"/><path d="M8.3 5 V11 M5.8 8.6 L8.3 11 L10.8 8.6" fill="none" stroke="#2b8ce6" stroke-width="1.3"/></svg>
<svg style="position:absolute;left:1136.50px;top:93.00px;overflow:visible;" width="7.00" height="5.00" viewBox="0 0 7.00 5.00"><path d="M1 1.25 L3.50 3.75 L6.00 1.25" fill="none" stroke="#3a3a3a" stroke-width="1.40" stroke-linecap="round" stroke-linejoin="round"/></svg>
<svg style="position:absolute;left:0.00px;top:0.00px;overflow:visible;" width="1429.00" height="200.00" viewBox="0 0 1429.00 200.00"><path d="M1117.2 118.6 L1125.1 110.9 Q1125.9 110.2 1126.6 110.9 L1130.7 115 Q1131.4 115.7 1130.7 116.5 L1123.1 124.2 Q1122.4 124.9 1121.6 124.2 L1117.2 119.9 Q1116.6 119.2 1117.2 118.6 Z" fill="#fff" stroke="#a43bc4" stroke-width="1.1"/><path d="M1117.2 118.6 L1120.3 115.6 L1126.1 121.3 L1123.1 124.2 Q1122.4 124.9 1121.6 124.2 L1117.2 119.9 Q1116.6 119.2 1117.2 118.6 Z" fill="#c57bdc" stroke="#a43bc4" stroke-width="1.1"/></svg>
<svg style="position:absolute;left:1136.50px;top:114.50px;overflow:visible;" width="7.00" height="5.00" viewBox="0 0 7.00 5.00"><path d="M1 1.25 L3.50 3.75 L6.00 1.25" fill="none" stroke="#3a3a3a" stroke-width="1.40" stroke-linecap="round" stroke-linejoin="round"/></svg>
<svg style="position:absolute;left:0.00px;top:0.00px;overflow:visible;" width="1429.00" height="200.00" viewBox="0 0 1429.00 200.00"><text x="1160.3" y="80.6" font-family="Liberation Sans" font-size="14.5" fill="#2b8ce6">A</text><text x="1161.2" y="94.2" font-family="Liberation Sans" font-size="13.5" fill="#444">Я</text><path d="M1172.9 75.6 H1188.6 L1182.6 83.2 V90.6 H1178.9 V83.2 Z" fill="none" stroke="#444" stroke-width="1.2" stroke-linejoin="round"/></svg>
<svg style="position:absolute;left:1194.40px;top:79.40px;overflow:visible;" width="7.20" height="5.20" viewBox="0 0 7.20 5.20"><path d="M1 1.30 L3.60 3.90 L6.20 1.30" fill="none" stroke="#3a3a3a" stroke-width="1.40" stroke-linecap="round" stroke-linejoin="round"/></svg>
<div style="position:absolute;left:1150.50px;top:102.76px;white-space:pre;font-family:'Liberation Sans',sans-serif;font-size:9.5px;line-height:1;will-change:transform;font-weight:400;font-style:normal;color:#262626;transform:scaleX(1.1450);transform-origin:0 0;-webkit-text-stroke:0.30px #262626;z-index:5">Сортировка</div>
<div style="position:absolute;left:1158.00px;top:114.36px;white-space:pre;font-family:'Liberation Sans',sans-serif;font-size:9.5px;line-height:1;will-change:transform;font-weight:400;font-style:normal;color:#262626;transform:scaleX(1.1070);transform-origin:0 0;-webkit-text-stroke:0.30px #262626;z-index:5">и фильтр</div>
<svg style="position:absolute;left:1220.50px;top:67.50px;overflow:visible;" width="30.00" height="30.00" viewBox="0 0 30.00 30.00"><circle cx="18.8" cy="11" r="10" fill="none" stroke="#444" stroke-width="1.2"/><path d="M11.8 18 L1 28.6" stroke="#444" stroke-width="1.3"/></svg>
<svg style="position:absolute;left:1255.70px;top:79.40px;overflow:visible;" width="7.20" height="5.20" viewBox="0 0 7.20 5.20"><path d="M1 1.30 L3.60 3.90 L6.20 1.30" fill="none" stroke="#3a3a3a" stroke-width="1.40" stroke-linecap="round" stroke-linejoin="round"/></svg>
<div style="position:absolute;left:1220.80px;top:103.16px;white-space:pre;font-family:'Liberation Sans',sans-serif;font-size:9.5px;line-height:1;will-change:transform;font-weight:400;font-style:normal;color:#262626;transform:scaleX(1.1665);transform-origin:0 0;-webkit-text-stroke:0.30px #262626;z-index:5">Найти и</div>
<div style="position:absolute;left:1217.60px;top:115.26px;white-space:pre;font-family:'Liberation Sans',sans-serif;font-size:9.5px;line-height:1;will-change:transform;font-weight:400;font-style:normal;color:#262626;transform:scaleX(1.1141);transform-origin:0 0;-webkit-text-stroke:0.30px #262626;z-index:5">выделить</div>
<div style="position:absolute;left:1278.00px;top:68.30px;width:1.00px;height:59.30px;background:#d9d9d9;"></div>
<svg style="position:absolute;left:1305.50px;top:67.30px;overflow:visible;" width="29.50" height="28.50" viewBox="0 0 29.50 28.50"><rect x="0.7" y="0.7" width="28" height="27" fill="#fbe4dd" stroke="#e0664a" stroke-width="1.3"/><rect x="3.5" y="3.3" width="10" height="9.8" fill="#fff" stroke="#e0664a" stroke-width="1.1"/><rect x="15.8" y="3.3" width="10" height="9.8" fill="#fff" stroke="#e0664a" stroke-width="1.1"/><rect x="3.5" y="15.3" width="10" height="9.8" fill="#fff" stroke="#e0664a" stroke-width="1.1"/><rect x="15.8" y="15.3" width="10" height="9.8" fill="#fff" stroke="#e0664a" stroke-width="1.1"/></svg>
<div style="position:absolute;left:1290.50px;top:103.16px;white-space:pre;font-family:'Liberation Sans',sans-serif;font-size:9.5px;line-height:1;will-change:transform;font-weight:400;font-style:normal;color:#262626;transform:scaleX(1.1683);transform-origin:0 0;-webkit-text-stroke:0.30px #262626;z-index:5">Надстройки</div>
<div style="position:absolute;left:0.00px;top:131.00px;width:1429.00px;height:1.00px;background:#d9d9d9;"></div>
<div style="position:absolute;left:0.00px;top:132.00px;width:1429.00px;height:29.00px;background:#ffffff;"></div>
<div style="position:absolute;left:80.00px;top:132.00px;width:1.00px;height:25.40px;background:#d9d9d9;"></div>
<div style="position:absolute;left:173.00px;top:135.30px;width:1.20px;height:20.00px;background:#d0d0d0;"></div>
<div style="position:absolute;left:174.50px;top:135.30px;width:1231.00px;height:1.00px;background:#f1f1f1;"></div>
<div style="position:absolute;left:174.50px;top:154.60px;width:1231.00px;height:1.00px;background:#f3f3f3;"></div>
<div style="position:absolute;left:8.20px;top:139.44px;white-space:pre;font-family:'Liberation Sans',sans-serif;font-size:12px;line-height:1;will-change:transform;font-weight:400;font-style:normal;color:#1f1f1f;transform:scaleX(0.9902);transform-origin:0 0;-webkit-text-stroke:0.25px #1f1f1f;z-index:5">C22</div>
<svg style="position:absolute;left:72.30px;top:136.30px;overflow:visible;" width="7.50" height="17.00" viewBox="0 0 7.50 17.00"><path d="M0.5 5.3 L3.75 0.5 L7 5.3 Z M0.5 11 L3.75 15.8 L7 11 Z" fill="#6b6b6b"/></svg>
<svg style="position:absolute;left:94.30px;top:141.30px;overflow:visible;" width="12.50" height="10.80" viewBox="0 0 12.50 10.80"><path d="M0.8 0.8 L11.5 10.2 M11.5 0.8 L0.8 10.2" stroke="#c6c6c6" stroke-width="2"/></svg>
<svg style="position:absolute;left:122.50px;top:141.30px;overflow:visible;" width="13.50" height="10.50" viewBox="0 0 13.50 10.50"><path d="M0.8 5.8 L4.6 9.6 L12.8 0.8" fill="none" stroke="#c6c6c6" stroke-width="2"/></svg>
<div style="position:absolute;left:145.30px;top:137.80px;white-space:pre;font-family:'Liberation Serif',sans-serif;font-size:15px;line-height:1;will-change:transform;font-weight:400;font-style:italic;color:#3c3c3c;transform:scaleX(1.2929);transform-origin:0 0;z-index:5">fx</div>
<svg style="position:absolute;left:164.50px;top:144.50px;overflow:visible;" width="7.00" height="4.00" viewBox="0 0 7.00 4.00"><path d="M0.5 0.5 L3.5 3.3 L6.5 0.5" fill="none" stroke="#bdbdbd" stroke-width="0.9"/></svg>
<div style="position:absolute;left:182.00px;top:139.64px;white-space:pre;font-family:'Liberation Sans',sans-serif;font-size:12px;line-height:1;will-change:transform;font-weight:400;font-style:normal;color:#1f1f1f;transform:scaleX(0.9759);transform-origin:0 0;-webkit-text-stroke:0.25px #1f1f1f;z-index:5">=C21+15</div>
<div style="position:absolute;left:1405.80px;top:136.00px;width:22.60px;height:19.00px;background:#ffffff;box-sizing:border-box;border:1px solid #dcdcdc;border-radius:3px;"></div>
<svg style="position:absolute;left:1413.80px;top:142.80px;overflow:visible;" width="7.00" height="5.50" viewBox="0 0 7.00 5.50"><path d="M0 0 H6.6 L3.3 5.3 Z" fill="#555"/></svg>
<div style="position:absolute;left:0.00px;top:157.00px;width:1429.00px;height:1.00px;background:#cfcfcf;"></div>
<div style="position:absolute;left:0.00px;top:158.00px;width:1429.00px;height:2.00px;background:#e6e6e6;"></div>
<div style="position:absolute;left:0.00px;top:160.00px;width:1429.00px;height:1.00px;background:#d2d2d2;"></div>
<div style="position:absolute;left:0.00px;top:160.70px;width:1429.00px;height:16.80px;background:#f9f9f9;"></div>
<div style="position:absolute;left:17.30px;top:160.70px;width:229.15px;height:0.00px;background:#fff;"></div>
<div style="position:absolute;left:274.75px;top:160.70px;width:229.15px;height:16.80px;background:#efefef;"></div>
<div style="position:absolute;left:41.70px;top:160.70px;width:1.00px;height:16.50px;background:#e0e0e0;"></div>
<div style="position:absolute;left:274.25px;top:160.70px;width:1.00px;height:16.50px;background:#e0e0e0;"></div>
<div style="position:absolute;left:503.40px;top:160.70px;width:1.00px;height:16.50px;background:#e0e0e0;"></div>
<div style="position:absolute;left:594.70px;top:160.70px;width:1.00px;height:16.50px;background:#e0e0e0;"></div>
<div style="position:absolute;left:636.55px;top:160.70px;width:1.00px;height:16.50px;background:#e0e0e0;"></div>
<div style="position:absolute;left:678.40px;top:160.70px;width:1.00px;height:16.50px;background:#e0e0e0;"></div>
<div style="position:absolute;left:720.25px;top:160.70px;width:1.00px;height:16.50px;background:#e0e0e0;"></div>
<div style="position:absolute;left:762.10px;top:160.70px;width:1.00px;height:16.50px;background:#e0e0e0;"></div>
<div style="position:absolute;left:803.95px;top:160.70px;width:1.00px;height:16.50px;background:#e0e0e0;"></div>
<div style="position:absolute;left:845.80px;top:160.70px;width:1.00px;height:16.50px;background:#e0e0e0;"></div>
<div style="position:absolute;left:887.65px;top:160.70px;width:1.00px;height:16.50px;background:#e0e0e0;"></div>
<div style="position:absolute;left:929.50px;top:160.70px;width:1.00px;height:16.50px;background:#e0e0e0;"></div>
<div style="position:absolute;left:971.35px;top:160.70px;width:1.00px;height:16.50px;background:#e0e0e0;"></div>
<div style="position:absolute;left:1013.20px;top:160.70px;width:1.00px;height:16.50px;background:#e0e0e0;"></div>
<div style="position:absolute;left:1055.05px;top:160.70px;width:1.00px;height:16.50px;background:#e0e0e0;"></div>
<div style="position:absolute;left:1096.90px;top:160.70px;width:1.00px;height:16.50px;background:#e0e0e0;"></div>
<div style="position:absolute;left:1138.75px;top:160.70px;width:1.00px;height:16.50px;background:#e0e0e0;"></div>
<div style="position:absolute;left:1180.60px;top:160.70px;width:1.00px;height:16.50px;background:#e0e0e0;"></div>
<div style="position:absolute;left:1222.45px;top:160.70px;width:1.00px;height:16.50px;background:#e0e0e0;"></div>
<div style="position:absolute;left:1264.30px;top:160.70px;width:1.00px;height:16.50px;background:#e0e0e0;"></div>
<div style="position:absolute;left:1306.15px;top:160.70px;width:1.00px;height:16.50px;background:#e0e0e0;"></div>
<div style="position:absolute;left:1348.00px;top:160.70px;width:1.00px;height:16.50px;background:#e0e0e0;"></div>
<div style="position:absolute;left:1389.85px;top:160.70px;width:1.00px;height:16.50px;background:#e0e0e0;"></div>
<div style="position:absolute;left:1431.70px;top:160.70px;width:1.00px;height:16.50px;background:#e0e0e0;"></div>
<div style="position:absolute;left:0.00px;top:177.20px;width:1429.00px;height:1.00px;background:#cdcdcd;"></div>
<div style="position:absolute;left:275.25px;top:175.60px;width:229.15px;height:2.20px;background:#1e7043;"></div>
<div style="position:absolute;left:27.08px;top:165.93px;white-space:pre;font-family:'Liberation Sans',sans-serif;font-size:8px;line-height:1;will-change:transform;font-weight:400;font-style:normal;color:#606060;-webkit-text-stroke:0.20px #606060;z-index:5">A</div>
<div style="position:absolute;left:155.80px;top:165.93px;white-space:pre;font-family:'Liberation Sans',sans-serif;font-size:8px;line-height:1;will-change:transform;font-weight:400;font-style:normal;color:#606060;-webkit-text-stroke:0.20px #606060;z-index:5">B</div>
<div style="position:absolute;left:386.43px;top:165.93px;white-space:pre;font-family:'Liberation Sans',sans-serif;font-size:8px;line-height:1;will-change:transform;font-weight:400;font-style:normal;color:#1f7145;-webkit-text-stroke:0.20px #1f7145;z-index:5">C</div>
<div style="position:absolute;left:546.66px;top:165.93px;white-space:pre;font-family:'Liberation Sans',sans-serif;font-size:8px;line-height:1;will-change:transform;font-weight:400;font-style:normal;color:#606060;-webkit-text-stroke:0.20px #606060;z-index:5">D</div>
<div style="position:absolute;left:613.45px;top:165.93px;white-space:pre;font-family:'Liberation Sans',sans-serif;font-size:8px;line-height:1;will-change:transform;font-weight:400;font-style:normal;color:#606060;-webkit-text-stroke:0.20px #606060;z-index:5">E</div>
<div style="position:absolute;left:655.53px;top:165.93px;white-space:pre;font-family:'Liberation Sans',sans-serif;font-size:8px;line-height:1;will-change:transform;font-weight:400;font-style:normal;color:#606060;-webkit-text-stroke:0.20px #606060;z-index:5">F</div>
<div style="position:absolute;left:696.71px;top:165.93px;white-space:pre;font-family:'Liberation Sans',sans-serif;font-size:8px;line-height:1;will-change:transform;font-weight:400;font-style:normal;color:#606060;-webkit-text-stroke:0.20px #606060;z-index:5">G</div>
<div style="position:absolute;left:738.78px;top:165.93px;white-space:pre;font-family:'Liberation Sans',sans-serif;font-size:8px;line-height:1;will-change:transform;font-weight:400;font-style:normal;color:#606060;-webkit-text-stroke:0.20px #606060;z-index:5">H</div>
<div style="position:absolute;left:782.41px;top:165.93px;white-space:pre;font-family:'Liberation Sans',sans-serif;font-size:8px;line-height:1;will-change:transform;font-weight:400;font-style:normal;color:#606060;-webkit-text-stroke:0.20px #606060;z-index:5">I</div>
<div style="position:absolute;left:823.38px;top:165.93px;white-space:pre;font-family:'Liberation Sans',sans-serif;font-size:8px;line-height:1;will-change:transform;font-weight:400;font-style:normal;color:#606060;-webkit-text-stroke:0.20px #606060;z-index:5">J</div>
<div style="position:absolute;left:864.55px;top:165.93px;white-space:pre;font-family:'Liberation Sans',sans-serif;font-size:8px;line-height:1;will-change:transform;font-weight:400;font-style:normal;color:#606060;-webkit-text-stroke:0.20px #606060;z-index:5">K</div>
<div style="position:absolute;left:906.85px;top:165.93px;white-space:pre;font-family:'Liberation Sans',sans-serif;font-size:8px;line-height:1;will-change:transform;font-weight:400;font-style:normal;color:#606060;-webkit-text-stroke:0.20px #606060;z-index:5">L</div>
<div style="position:absolute;left:947.59px;top:165.93px;white-space:pre;font-family:'Liberation Sans',sans-serif;font-size:8px;line-height:1;will-change:transform;font-weight:400;font-style:normal;color:#606060;-webkit-text-stroke:0.20px #606060;z-index:5">M</div>
<div style="position:absolute;left:989.88px;top:165.93px;white-space:pre;font-family:'Liberation Sans',sans-serif;font-size:8px;line-height:1;will-change:transform;font-weight:400;font-style:normal;color:#606060;-webkit-text-stroke:0.20px #606060;z-index:5">N</div>
<div style="position:absolute;left:1031.51px;top:165.93px;white-space:pre;font-family:'Liberation Sans',sans-serif;font-size:8px;line-height:1;will-change:transform;font-weight:400;font-style:normal;color:#606060;-webkit-text-stroke:0.20px #606060;z-index:5">O</div>
<div style="position:absolute;left:1073.80px;top:165.93px;white-space:pre;font-family:'Liberation Sans',sans-serif;font-size:8px;line-height:1;will-change:transform;font-weight:400;font-style:normal;color:#606060;-webkit-text-stroke:0.20px #606060;z-index:5">P</div>
<div style="position:absolute;left:1115.21px;top:165.93px;white-space:pre;font-family:'Liberation Sans',sans-serif;font-size:8px;line-height:1;will-change:transform;font-weight:400;font-style:normal;color:#606060;-webkit-text-stroke:0.20px #606060;z-index:5">Q</div>
<div style="position:absolute;left:1157.28px;top:165.93px;white-space:pre;font-family:'Liberation Sans',sans-serif;font-size:8px;line-height:1;will-change:transform;font-weight:400;font-style:normal;color:#606060;-webkit-text-stroke:0.20px #606060;z-index:5">R</div>
<div style="position:absolute;left:1199.35px;top:165.93px;white-space:pre;font-family:'Liberation Sans',sans-serif;font-size:8px;line-height:1;will-change:transform;font-weight:400;font-style:normal;color:#606060;-webkit-text-stroke:0.20px #606060;z-index:5">S</div>
<div style="position:absolute;left:1241.43px;top:165.93px;white-space:pre;font-family:'Liberation Sans',sans-serif;font-size:8px;line-height:1;will-change:transform;font-weight:400;font-style:normal;color:#606060;-webkit-text-stroke:0.20px #606060;z-index:5">T</div>
<div style="position:absolute;left:1282.83px;top:165.93px;white-space:pre;font-family:'Liberation Sans',sans-serif;font-size:8px;line-height:1;will-change:transform;font-weight:400;font-style:normal;color:#606060;-webkit-text-stroke:0.20px #606060;z-index:5">U</div>
<div style="position:absolute;left:1324.90px;top:165.93px;white-space:pre;font-family:'Liberation Sans',sans-serif;font-size:8px;line-height:1;will-change:transform;font-weight:400;font-style:normal;color:#606060;-webkit-text-stroke:0.20px #606060;z-index:5">V</div>
<div style="position:absolute;left:1365.64px;top:165.93px;white-space:pre;font-family:'Liberation Sans',sans-serif;font-size:8px;line-height:1;will-change:transform;font-weight:400;font-style:normal;color:#606060;-webkit-text-stroke:0.20px #606060;z-index:5">W</div>
<div style="position:absolute;left:1408.60px;top:165.93px;white-space:pre;font-family:'Liberation Sans',sans-serif;font-size:8px;line-height:1;will-change:transform;font-weight:400;font-style:normal;color:#606060;-webkit-text-stroke:0.20px #606060;z-index:5">X</div>
<svg style="position:absolute;left:4.30px;top:165.00px;overflow:visible;" width="11.00" height="10.00" viewBox="0 0 11.00 10.00"><path d="M10.5 0 V9.5 H0 Z" fill="#d9d9d9"/></svg>
<div style="position:absolute;left:0.00px;top:178.20px;width:1429.00px;height:573.00px;background:#ffffff;"></div>
<div style="position:absolute;left:0.00px;top:178.20px;width:17.30px;height:573.00px;background:#f7f7f7;"></div>
<div style="position:absolute;left:16.80px;top:160.70px;width:1.20px;height:590.50px;background:#d9d9d9;"></div>
<div style="position:absolute;left:0.00px;top:198.10px;width:16.80px;height:1.00px;background:#e6e6e6;"></div>
<div style="position:absolute;left:0.00px;top:218.50px;width:16.80px;height:1.00px;background:#e6e6e6;"></div>
<div style="position:absolute;left:0.00px;top:238.90px;width:16.80px;height:1.00px;background:#e6e6e6;"></div>
<div style="position:absolute;left:0.00px;top:259.90px;width:16.80px;height:1.00px;background:#e6e6e6;"></div>
<div style="position:absolute;left:0.00px;top:280.10px;width:16.80px;height:1.00px;background:#e6e6e6;"></div>
<div style="position:absolute;left:0.00px;top:300.70px;width:16.80px;height:1.00px;background:#e6e6e6;"></div>
<div style="position:absolute;left:0.00px;top:321.20px;width:16.80px;height:1.00px;background:#e6e6e6;"></div>
<div style="position:absolute;left:0.00px;top:341.60px;width:16.80px;height:1.00px;background:#e6e6e6;"></div>
<div style="position:absolute;left:0.00px;top:361.80px;width:16.80px;height:1.00px;background:#e6e6e6;"></div>
<div style="position:absolute;left:0.00px;top:382.40px;width:16.80px;height:1.00px;background:#e6e6e6;"></div>
<div style="position:absolute;left:0.00px;top:402.70px;width:16.80px;height:1.00px;background:#e6e6e6;"></div>
<div style="position:absolute;left:0.00px;top:423.00px;width:16.80px;height:1.00px;background:#e6e6e6;"></div>
<div style="position:absolute;left:0.00px;top:443.60px;width:16.80px;height:1.00px;background:#e6e6e6;"></div>
<div style="position:absolute;left:0.00px;top:464.50px;width:16.80px;height:1.00px;background:#e6e6e6;"></div>
<div style="position:absolute;left:0.00px;top:485.90px;width:16.80px;height:1.00px;background:#e6e6e6;"></div>
<div style="position:absolute;left:0.00px;top:506.90px;width:16.80px;height:1.00px;background:#e6e6e6;"></div>
<div style="position:absolute;left:0.00px;top:527.50px;width:16.80px;height:1.00px;background:#e6e6e6;"></div>
<div style="position:absolute;left:0.00px;top:547.70px;width:16.80px;height:1.00px;background:#e6e6e6;"></div>
<div style="position:absolute;left:0.00px;top:568.10px;width:16.80px;height:1.00px;background:#e6e6e6;"></div>
<div style="position:absolute;left:0.00px;top:588.70px;width:16.80px;height:1.00px;background:#e6e6e6;"></div>
<div style="position:absolute;left:0.00px;top:609.10px;width:16.80px;height:1.00px;background:#e6e6e6;"></div>
<div style="position:absolute;left:0.00px;top:630.10px;width:16.80px;height:1.00px;background:#e6e6e6;"></div>
<div style="position:absolute;left:0.00px;top:641.80px;width:16.80px;height:1.00px;background:#e6e6e6;"></div>
<div style="position:absolute;left:0.00px;top:653.40px;width:16.80px;height:1.00px;background:#e6e6e6;"></div>
<div style="position:absolute;left:0.00px;top:665.20px;width:16.80px;height:1.00px;background:#e6e6e6;"></div>
<div style="position:absolute;left:0.00px;top:676.90px;width:16.80px;height:1.00px;background:#e6e6e6;"></div>
<div style="position:absolute;left:0.00px;top:688.70px;width:16.80px;height:1.00px;background:#e6e6e6;"></div>
<div style="position:absolute;left:0.00px;top:700.30px;width:16.80px;height:1.00px;background:#e6e6e6;"></div>
<div style="position:absolute;left:0.00px;top:712.30px;width:16.80px;height:1.00px;background:#e6e6e6;"></div>
<div style="position:absolute;left:0.00px;top:723.70px;width:16.80px;height:1.00px;background:#e6e6e6;"></div>
<div style="position:absolute;left:0.00px;top:735.40px;width:16.80px;height:1.00px;background:#e6e6e6;"></div>
<div style="position:absolute;left:0.00px;top:747.20px;width:16.80px;height:1.00px;background:#e6e6e6;"></div>
<div style="position:absolute;left:5.97px;top:187.93px;white-space:pre;font-family:'Liberation Sans',sans-serif;font-size:8.0px;line-height:1;will-change:transform;font-weight:400;font-style:normal;color:#555555;-webkit-text-stroke:0.15px #555555;z-index:5">1</div>
<div style="position:absolute;left:5.97px;top:208.33px;white-space:pre;font-family:'Liberation Sans',sans-serif;font-size:8.0px;line-height:1;will-change:transform;font-weight:400;font-style:normal;color:#555555;-webkit-text-stroke:0.15px #555555;z-index:5">2</div>
<div style="position:absolute;left:5.97px;top:228.73px;white-space:pre;font-family:'Liberation Sans',sans-serif;font-size:8.0px;line-height:1;will-change:transform;font-weight:400;font-style:normal;color:#555555;-webkit-text-stroke:0.15px #555555;z-index:5">3</div>
<div style="position:absolute;left:5.97px;top:249.73px;white-space:pre;font-family:'Liberation Sans',sans-serif;font-size:8.0px;line-height:1;will-change:transform;font-weight:400;font-style:normal;color:#555555;-webkit-text-stroke:0.15px #555555;z-index:5">4</div>
<div style="position:absolute;left:5.97px;top:269.93px;white-space:pre;font-family:'Liberation Sans',sans-serif;font-size:8.0px;line-height:1;will-change:transform;font-weight:400;font-style:normal;color:#555555;-webkit-text-stroke:0.15px #555555;z-index:5">5</div>
<div style="position:absolute;left:5.97px;top:290.53px;white-space:pre;font-family:'Liberation Sans',sans-serif;font-size:8.0px;line-height:1;will-change:transform;font-weight:400;font-style:normal;color:#555555;-webkit-text-stroke:0.15px #555555;z-index:5">6</div>
<div style="position:absolute;left:5.97px;top:311.03px;white-space:pre;font-family:'Liberation Sans',sans-serif;font-size:8.0px;line-height:1;will-change:transform;font-weight:400;font-style:normal;color:#555555;-webkit-text-stroke:0.15px #555555;z-index:5">7</div>
<div style="position:absolute;left:5.97px;top:331.43px;white-space:pre;font-family:'Liberation Sans',sans-serif;font-size:8.0px;line-height:1;will-change:transform;font-weight:400;font-style:normal;color:#555555;-webkit-text-stroke:0.15px #555555;z-index:5">8</div>
<div style="position:absolute;left:5.97px;top:351.63px;white-space:pre;font-family:'Liberation Sans',sans-serif;font-size:8.0px;line-height:1;will-change:transform;font-weight:400;font-style:normal;color:#555555;-webkit-text-stroke:0.15px #555555;z-index:5">9</div>
<div style="position:absolute;left:3.75px;top:372.23px;white-space:pre;font-family:'Liberation Sans',sans-serif;font-size:8.0px;line-height:1;will-change:transform;font-weight:400;font-style:normal;color:#555555;-webkit-text-stroke:0.15px #555555;z-index:5">10</div>
<div style="position:absolute;left:4.04px;top:392.53px;white-space:pre;font-family:'Liberation Sans',sans-serif;font-size:8.0px;line-height:1;will-change:transform;font-weight:400;font-style:normal;color:#555555;-webkit-text-stroke:0.15px #555555;z-index:5">11</div>
<div style="position:absolute;left:3.75px;top:412.83px;white-space:pre;font-family:'Liberation Sans',sans-serif;font-size:8.0px;line-height:1;will-change:transform;font-weight:400;font-style:normal;color:#555555;-webkit-text-stroke:0.15px #555555;z-index:5">12</div>
<div style="position:absolute;left:3.75px;top:433.43px;white-space:pre;font-family:'Liberation Sans',sans-serif;font-size:8.0px;line-height:1;will-change:transform;font-weight:400;font-style:normal;color:#555555;-webkit-text-stroke:0.15px #555555;z-index:5">13</div>
<div style="position:absolute;left:3.75px;top:454.33px;white-space:pre;font-family:'Liberation Sans',sans-serif;font-size:8.0px;line-height:1;will-change:transform;font-weight:400;font-style:normal;color:#555555;-webkit-text-stroke:0.15px #555555;z-index:5">14</div>
<div style="position:absolute;left:3.75px;top:475.73px;white-space:pre;font-family:'Liberation Sans',sans-serif;font-size:8.0px;line-height:1;will-change:transform;font-weight:400;font-style:normal;color:#555555;-webkit-text-stroke:0.15px #555555;z-index:5">15</div>
<div style="position:absolute;left:3.75px;top:496.73px;white-space:pre;font-family:'Liberation Sans',sans-serif;font-size:8.0px;line-height:1;will-change:transform;font-weight:400;font-style:normal;color:#555555;-webkit-text-stroke:0.15px #555555;z-index:5">16</div>
<div style="position:absolute;left:3.75px;top:517.33px;white-space:pre;font-family:'Liberation Sans',sans-serif;font-size:8.0px;line-height:1;will-change:transform;font-weight:400;font-style:normal;color:#555555;-webkit-text-stroke:0.15px #555555;z-index:5">17</div>
<div style="position:absolute;left:3.75px;top:537.53px;white-space:pre;font-family:'Liberation Sans',sans-serif;font-size:8.0px;line-height:1;will-change:transform;font-weight:400;font-style:normal;color:#555555;-webkit-text-stroke:0.15px #555555;z-index:5">18</div>
<div style="position:absolute;left:3.75px;top:557.93px;white-space:pre;font-family:'Liberation Sans',sans-serif;font-size:8.0px;line-height:1;will-change:transform;font-weight:400;font-style:normal;color:#555555;-webkit-text-stroke:0.15px #555555;z-index:5">19</div>
<div style="position:absolute;left:3.75px;top:578.53px;white-space:pre;font-family:'Liberation Sans',sans-serif;font-size:8.0px;line-height:1;will-change:transform;font-weight:400;font-style:normal;color:#555555;-webkit-text-stroke:0.15px #555555;z-index:5">20</div>
<div style="position:absolute;left:3.75px;top:598.93px;white-space:pre;font-family:'Liberation Sans',sans-serif;font-size:8.0px;line-height:1;will-change:transform;font-weight:400;font-style:normal;color:#555555;-webkit-text-stroke:0.15px #555555;z-index:5">21</div>
<div style="position:absolute;left:3.75px;top:619.93px;white-space:pre;font-family:'Liberation Sans',sans-serif;font-size:8.0px;line-height:1;will-change:transform;font-weight:400;font-style:normal;color:#1f7145;-webkit-text-stroke:0.15px #1f7145;z-index:5">22</div>
<div style="position:absolute;left:3.97px;top:634.57px;white-space:pre;font-family:'Liberation Sans',sans-serif;font-size:7.6px;line-height:1;will-change:transform;font-weight:400;font-style:normal;color:#555555;-webkit-text-stroke:0.15px #555555;z-index:5">23</div>
<div style="position:absolute;left:3.97px;top:646.17px;white-space:pre;font-family:'Liberation Sans',sans-serif;font-size:7.6px;line-height:1;will-change:transform;font-weight:400;font-style:normal;color:#555555;-webkit-text-stroke:0.15px #555555;z-index:5">24</div>
<div style="position:absolute;left:3.97px;top:657.97px;white-space:pre;font-family:'Liberation Sans',sans-serif;font-size:7.6px;line-height:1;will-change:transform;font-weight:400;font-style:normal;color:#555555;-webkit-text-stroke:0.15px #555555;z-index:5">25</div>
<div style="position:absolute;left:3.97px;top:669.67px;white-space:pre;font-family:'Liberation Sans',sans-serif;font-size:7.6px;line-height:1;will-change:transform;font-weight:400;font-style:normal;color:#555555;-webkit-text-stroke:0.15px #555555;z-index:5">26</div>
<div style="position:absolute;left:3.97px;top:681.47px;white-space:pre;font-family:'Liberation Sans',sans-serif;font-size:7.6px;line-height:1;will-change:transform;font-weight:400;font-style:normal;color:#555555;-webkit-text-stroke:0.15px #555555;z-index:5">27</div>
<div style="position:absolute;left:3.97px;top:693.07px;white-space:pre;font-family:'Liberation Sans',sans-serif;font-size:7.6px;line-height:1;will-change:transform;font-weight:400;font-style:normal;color:#555555;-webkit-text-stroke:0.15px #555555;z-index:5">28</div>
<div style="position:absolute;left:3.97px;top:705.07px;white-space:pre;font-family:'Liberation Sans',sans-serif;font-size:7.6px;line-height:1;will-change:transform;font-weight:400;font-style:normal;color:#555555;-webkit-text-stroke:0.15px #555555;z-index:5">29</div>
<div style="position:absolute;left:3.97px;top:716.47px;white-space:pre;font-family:'Liberation Sans',sans-serif;font-size:7.6px;line-height:1;will-change:transform;font-weight:400;font-style:normal;color:#555555;-webkit-text-stroke:0.15px #555555;z-index:5">30</div>
<div style="position:absolute;left:3.97px;top:728.17px;white-space:pre;font-family:'Liberation Sans',sans-serif;font-size:7.6px;line-height:1;will-change:transform;font-weight:400;font-style:normal;color:#555555;-webkit-text-stroke:0.15px #555555;z-index:5">31</div>
<div style="position:absolute;left:3.97px;top:739.97px;white-space:pre;font-family:'Liberation Sans',sans-serif;font-size:7.6px;line-height:1;will-change:transform;font-weight:400;font-style:normal;color:#555555;-webkit-text-stroke:0.15px #555555;z-index:5">32</div>
<div style="position:absolute;left:0.00px;top:609.60px;width:16.50px;height:21.00px;background:#eeeeee;"></div>
<div style="position:absolute;left:16.20px;top:609.60px;width:2.00px;height:22.00px;background:#1f7145;"></div>
<svg style="position:absolute;left:0.00px;top:0.00px;overflow:visible;" width="1429.00" height="802.00" viewBox="0 0 1429.00 802.00"><rect x="17.30" y="238.88" width="577.90" height="1.05" fill="#1a1a1a"/><rect x="17.30" y="259.88" width="577.90" height="1.05" fill="#1a1a1a"/><rect x="17.30" y="280.08" width="577.90" height="1.05" fill="#1a1a1a"/><rect x="17.30" y="300.68" width="577.90" height="1.05" fill="#1a1a1a"/><rect x="17.30" y="321.18" width="577.90" height="1.05" fill="#1a1a1a"/><rect x="17.30" y="341.58" width="577.90" height="1.05" fill="#1a1a1a"/><rect x="17.30" y="361.78" width="577.90" height="1.05" fill="#1a1a1a"/><rect x="17.30" y="382.38" width="577.90" height="1.05" fill="#1a1a1a"/><rect x="17.30" y="402.68" width="577.90" height="1.05" fill="#1a1a1a"/><rect x="17.30" y="422.98" width="577.90" height="1.05" fill="#1a1a1a"/><rect x="17.30" y="443.58" width="577.90" height="1.05" fill="#1a1a1a"/><rect x="17.30" y="197.50" width="577.90" height="2.20" fill="#000"/><rect x="17.30" y="463.90" width="577.90" height="2.20" fill="#000"/><rect x="17.30" y="485.30" width="577.90" height="2.20" fill="#000"/><rect x="17.30" y="506.88" width="577.90" height="1.05" fill="#1a1a1a"/><rect x="17.30" y="527.48" width="577.90" height="1.05" fill="#1a1a1a"/><rect x="17.30" y="547.68" width="577.90" height="1.05" fill="#1a1a1a"/><rect x="17.30" y="568.08" width="577.90" height="1.05" fill="#1a1a1a"/><rect x="17.30" y="588.68" width="577.90" height="1.05" fill="#1a1a1a"/><rect x="17.30" y="609.08" width="577.90" height="1.05" fill="#1a1a1a"/><rect x="17.30" y="629.50" width="1411.70" height="2.20" fill="#000"/><rect x="41.98" y="198.60" width="1.05" height="245.50" fill="#1a1a1a"/><rect x="41.98" y="486.40" width="1.05" height="144.20" fill="#1a1a1a"/><rect x="274.48" y="198.60" width="1.05" height="245.50" fill="#1a1a1a"/><rect x="274.48" y="486.40" width="1.05" height="144.20" fill="#1a1a1a"/><rect x="502.98" y="198.60" width="1.05" height="245.50" fill="#1a1a1a"/><rect x="502.98" y="486.40" width="1.05" height="144.20" fill="#1a1a1a"/><rect x="593.95" y="177.70" width="2.10" height="454.00" fill="#000"/></svg>
<div style="position:absolute;left:270.60px;top:182.63px;white-space:pre;font-family:'Liberation Sans',sans-serif;font-size:13.2px;line-height:1;will-change:transform;font-weight:700;font-style:normal;color:#000;transform:scaleX(1.0932);transform-origin:0 0;-webkit-text-stroke:0.10px #000;z-index:5">Initial data</div>
<div style="position:absolute;left:26.50px;top:224.43px;white-space:pre;font-family:'Liberation Sans',sans-serif;font-size:13.2px;line-height:1;will-change:transform;font-weight:700;font-style:normal;color:#000;transform:scaleX(1.0213);transform-origin:0 0;-webkit-text-stroke:0.10px #000;z-index:5">#</div>
<div style="position:absolute;left:125.80px;top:224.43px;white-space:pre;font-family:'Liberation Sans',sans-serif;font-size:13.2px;line-height:1;will-change:transform;font-weight:400;font-style:normal;color:#000;transform:scaleX(1.0614);transform-origin:0 0;-webkit-text-stroke:0.20px #000;z-index:5">Parameter</div>
<div style="position:absolute;left:371.47px;top:224.43px;white-space:pre;font-family:'Liberation Sans',sans-serif;font-size:13.2px;line-height:1;will-change:transform;font-weight:400;font-style:normal;color:#000;transform:scaleX(1.0901);transform-origin:0 0;-webkit-text-stroke:0.20px #000;z-index:5">Value</div>
<div style="position:absolute;left:536.50px;top:224.43px;white-space:pre;font-family:'Liberation Sans',sans-serif;font-size:13.2px;line-height:1;will-change:transform;font-weight:400;font-style:normal;color:#000;transform:scaleX(1.1129);transform-origin:0 0;-webkit-text-stroke:0.20px #000;z-index:5">Unit</div>
<div style="position:absolute;left:31.80px;top:244.63px;white-space:pre;font-family:'Liberation Sans',sans-serif;font-size:13.2px;line-height:1;will-change:transform;font-weight:400;font-style:normal;color:#000;transform:scaleX(1.0617);transform-origin:0 0;-webkit-text-stroke:0.20px #000;z-index:5">1</div>
<div style="position:absolute;left:44.80px;top:244.63px;white-space:pre;font-family:'Liberation Sans',sans-serif;font-size:13.2px;line-height:1;will-change:transform;font-weight:400;font-style:normal;color:#000;transform:scaleX(1.0614);transform-origin:0 0;-webkit-text-stroke:0.20px #000;z-index:5">Ships width</div>
<div style="position:absolute;left:381.54px;top:244.63px;white-space:pre;font-family:'Liberation Sans',sans-serif;font-size:13.2px;line-height:1;will-change:transform;font-weight:400;font-style:normal;color:#000;transform:scaleX(1.0618);transform-origin:0 0;-webkit-text-stroke:0.20px #000;z-index:5">13</div>
<div style="position:absolute;left:506.30px;top:244.63px;white-space:pre;font-family:'Liberation Sans',sans-serif;font-size:13.2px;line-height:1;will-change:transform;font-weight:400;font-style:normal;color:#000;transform:scaleX(1.0614);transform-origin:0 0;-webkit-text-stroke:0.20px #000;z-index:5">cont</div>
<div style="position:absolute;left:31.80px;top:264.83px;white-space:pre;font-family:'Liberation Sans',sans-serif;font-size:13.2px;line-height:1;will-change:transform;font-weight:400;font-style:normal;color:#000;transform:scaleX(1.0617);transform-origin:0 0;-webkit-text-stroke:0.20px #000;z-index:5">2</div>
<div style="position:absolute;left:44.80px;top:264.83px;white-space:pre;font-family:'Liberation Sans',sans-serif;font-size:13.2px;line-height:1;will-change:transform;font-weight:400;font-style:normal;color:#000;transform:scaleX(1.0617);transform-origin:0 0;-webkit-text-stroke:0.20px #000;z-index:5">Ships depth</div>
<div style="position:absolute;left:375.70px;top:264.83px;white-space:pre;font-family:'Liberation Sans',sans-serif;font-size:13.2px;line-height:1;will-change:transform;font-weight:400;font-style:normal;color:#000;transform:scaleX(1.0615);transform-origin:0 0;-webkit-text-stroke:0.20px #000;z-index:5">12,5</div>
<div style="position:absolute;left:506.30px;top:264.83px;white-space:pre;font-family:'Liberation Sans',sans-serif;font-size:13.2px;line-height:1;will-change:transform;font-weight:400;font-style:normal;color:#000;transform:scaleX(1.0611);transform-origin:0 0;-webkit-text-stroke:0.20px #000;z-index:5">m</div>
<div style="position:absolute;left:31.80px;top:285.43px;white-space:pre;font-family:'Liberation Sans',sans-serif;font-size:13.2px;line-height:1;will-change:transform;font-weight:400;font-style:normal;color:#000;transform:scaleX(1.0617);transform-origin:0 0;-webkit-text-stroke:0.20px #000;z-index:5">3</div>
<div style="position:absolute;left:44.80px;top:285.43px;white-space:pre;font-family:'Liberation Sans',sans-serif;font-size:13.2px;line-height:1;will-change:transform;font-weight:400;font-style:normal;color:#000;transform:scaleX(1.0616);transform-origin:0 0;-webkit-text-stroke:0.20px #000;z-index:5">Containers on hatch covers</div>
<div style="position:absolute;left:385.43px;top:285.43px;white-space:pre;font-family:'Liberation Sans',sans-serif;font-size:13.2px;line-height:1;will-change:transform;font-weight:400;font-style:normal;color:#000;transform:scaleX(1.0617);transform-origin:0 0;-webkit-text-stroke:0.20px #000;z-index:5">6</div>
<div style="position:absolute;left:506.30px;top:285.43px;white-space:pre;font-family:'Liberation Sans',sans-serif;font-size:13.2px;line-height:1;will-change:transform;font-weight:400;font-style:normal;color:#000;transform:scaleX(1.0614);transform-origin:0 0;-webkit-text-stroke:0.20px #000;z-index:5">cont</div>
<div style="position:absolute;left:31.80px;top:305.93px;white-space:pre;font-family:'Liberation Sans',sans-serif;font-size:13.2px;line-height:1;will-change:transform;font-weight:400;font-style:normal;color:#000;transform:scaleX(1.0617);transform-origin:0 0;-webkit-text-stroke:0.20px #000;z-index:5">4</div>
<div style="position:absolute;left:44.80px;top:305.93px;white-space:pre;font-family:'Liberation Sans',sans-serif;font-size:13.2px;line-height:1;will-change:transform;font-weight:400;font-style:normal;color:#000;transform:scaleX(1.0616);transform-origin:0 0;-webkit-text-stroke:0.20px #000;z-index:5">Containers under hatch covers</div>
<div style="position:absolute;left:385.43px;top:305.93px;white-space:pre;font-family:'Liberation Sans',sans-serif;font-size:13.2px;line-height:1;will-change:transform;font-weight:400;font-style:normal;color:#000;transform:scaleX(1.0617);transform-origin:0 0;-webkit-text-stroke:0.20px #000;z-index:5">5</div>
<div style="position:absolute;left:506.30px;top:305.93px;white-space:pre;font-family:'Liberation Sans',sans-serif;font-size:13.2px;line-height:1;will-change:transform;font-weight:400;font-style:normal;color:#000;transform:scaleX(1.0614);transform-origin:0 0;-webkit-text-stroke:0.20px #000;z-index:5">cont</div>
<div style="position:absolute;left:31.80px;top:326.33px;white-space:pre;font-family:'Liberation Sans',sans-serif;font-size:13.2px;line-height:1;will-change:transform;font-weight:400;font-style:normal;color:#000;transform:scaleX(1.0617);transform-origin:0 0;-webkit-text-stroke:0.20px #000;z-index:5">5</div>
<div style="position:absolute;left:44.80px;top:326.33px;white-space:pre;font-family:'Liberation Sans',sans-serif;font-size:13.2px;line-height:1;will-change:transform;font-weight:400;font-style:normal;color:#000;transform:scaleX(1.0615);transform-origin:0 0;-webkit-text-stroke:0.20px #000;z-index:5">Fenders' width</div>
<div style="position:absolute;left:385.43px;top:326.33px;white-space:pre;font-family:'Liberation Sans',sans-serif;font-size:13.2px;line-height:1;will-change:transform;font-weight:400;font-style:normal;color:#000;transform:scaleX(1.0617);transform-origin:0 0;-webkit-text-stroke:0.20px #000;z-index:5">2</div>
<div style="position:absolute;left:506.30px;top:326.33px;white-space:pre;font-family:'Liberation Sans',sans-serif;font-size:13.2px;line-height:1;will-change:transform;font-weight:400;font-style:normal;color:#000;transform:scaleX(1.0611);transform-origin:0 0;-webkit-text-stroke:0.20px #000;z-index:5">m</div>
<div style="position:absolute;left:31.80px;top:346.53px;white-space:pre;font-family:'Liberation Sans',sans-serif;font-size:13.2px;line-height:1;will-change:transform;font-weight:400;font-style:normal;color:#000;transform:scaleX(1.0617);transform-origin:0 0;-webkit-text-stroke:0.20px #000;z-index:5">6</div>
<div style="position:absolute;left:44.80px;top:346.53px;white-space:pre;font-family:'Liberation Sans',sans-serif;font-size:13.2px;line-height:1;will-change:transform;font-weight:400;font-style:normal;color:#000;transform:scaleX(1.0614);transform-origin:0 0;-webkit-text-stroke:0.20px #000;z-index:5">Distance to rail</div>
<div style="position:absolute;left:385.43px;top:346.53px;white-space:pre;font-family:'Liberation Sans',sans-serif;font-size:13.2px;line-height:1;will-change:transform;font-weight:400;font-style:normal;color:#000;transform:scaleX(1.0617);transform-origin:0 0;-webkit-text-stroke:0.20px #000;z-index:5">4</div>
<div style="position:absolute;left:506.30px;top:346.53px;white-space:pre;font-family:'Liberation Sans',sans-serif;font-size:13.2px;line-height:1;will-change:transform;font-weight:400;font-style:normal;color:#000;transform:scaleX(1.0611);transform-origin:0 0;-webkit-text-stroke:0.20px #000;z-index:5">m</div>
<div style="position:absolute;left:31.80px;top:367.13px;white-space:pre;font-family:'Liberation Sans',sans-serif;font-size:13.2px;line-height:1;will-change:transform;font-weight:400;font-style:normal;color:#000;transform:scaleX(1.0617);transform-origin:0 0;-webkit-text-stroke:0.20px #000;z-index:5">7</div>
<div style="position:absolute;left:44.80px;top:367.13px;white-space:pre;font-family:'Liberation Sans',sans-serif;font-size:13.2px;line-height:1;will-change:transform;font-weight:400;font-style:normal;color:#000;transform:scaleX(1.0615);transform-origin:0 0;-webkit-text-stroke:0.20px #000;z-index:5">Gauge</div>
<div style="position:absolute;left:371.80px;top:367.13px;white-space:pre;font-family:'Liberation Sans',sans-serif;font-size:13.2px;line-height:1;will-change:transform;font-weight:400;font-style:normal;color:#000;transform:scaleX(1.0615);transform-origin:0 0;-webkit-text-stroke:0.20px #000;z-index:5">30.48</div>
<div style="position:absolute;left:506.30px;top:367.13px;white-space:pre;font-family:'Liberation Sans',sans-serif;font-size:13.2px;line-height:1;will-change:transform;font-weight:400;font-style:normal;color:#000;transform:scaleX(1.0611);transform-origin:0 0;-webkit-text-stroke:0.20px #000;z-index:5">m</div>
<div style="position:absolute;left:31.80px;top:387.43px;white-space:pre;font-family:'Liberation Sans',sans-serif;font-size:13.2px;line-height:1;will-change:transform;font-weight:400;font-style:normal;color:#000;transform:scaleX(1.0617);transform-origin:0 0;-webkit-text-stroke:0.20px #000;z-index:5">8</div>
<div style="position:absolute;left:44.80px;top:387.43px;white-space:pre;font-family:'Liberation Sans',sans-serif;font-size:13.2px;line-height:1;will-change:transform;font-weight:400;font-style:normal;color:#000;transform:scaleX(1.0616);transform-origin:0 0;-webkit-text-stroke:0.20px #000;z-index:5">Technology</div>
<div style="position:absolute;left:380.77px;top:387.43px;white-space:pre;font-family:'Liberation Sans',sans-serif;font-size:13.2px;line-height:1;will-change:transform;font-weight:400;font-style:normal;color:#000;transform:scaleX(1.0610);transform-origin:0 0;-webkit-text-stroke:0.20px #000;z-index:5">TT</div>
<div style="position:absolute;left:506.30px;top:387.43px;white-space:pre;font-family:'Liberation Sans',sans-serif;font-size:13.2px;line-height:1;will-change:transform;font-weight:400;font-style:normal;color:#000;transform:scaleX(1.0603);transform-origin:0 0;-webkit-text-stroke:0.20px #000;z-index:5">-</div>
<div style="position:absolute;left:31.80px;top:407.73px;white-space:pre;font-family:'Liberation Sans',sans-serif;font-size:13.2px;line-height:1;will-change:transform;font-weight:400;font-style:normal;color:#000;transform:scaleX(1.0617);transform-origin:0 0;-webkit-text-stroke:0.20px #000;z-index:5">9</div>
<div style="position:absolute;left:44.80px;top:407.73px;white-space:pre;font-family:'Liberation Sans',sans-serif;font-size:13.2px;line-height:1;will-change:transform;font-weight:400;font-style:normal;color:#000;transform:scaleX(1.0617);transform-origin:0 0;-webkit-text-stroke:0.20px #000;z-index:5">Quay level</div>
<div style="position:absolute;left:385.43px;top:407.73px;white-space:pre;font-family:'Liberation Sans',sans-serif;font-size:13.2px;line-height:1;will-change:transform;font-weight:400;font-style:normal;color:#000;transform:scaleX(1.0617);transform-origin:0 0;-webkit-text-stroke:0.20px #000;z-index:5">5</div>
<div style="position:absolute;left:506.30px;top:407.73px;white-space:pre;font-family:'Liberation Sans',sans-serif;font-size:13.2px;line-height:1;will-change:transform;font-weight:400;font-style:normal;color:#000;transform:scaleX(1.0611);transform-origin:0 0;-webkit-text-stroke:0.20px #000;z-index:5">m</div>
<div style="position:absolute;left:24.02px;top:428.33px;white-space:pre;font-family:'Liberation Sans',sans-serif;font-size:13.2px;line-height:1;will-change:transform;font-weight:400;font-style:normal;color:#000;transform:scaleX(1.0618);transform-origin:0 0;-webkit-text-stroke:0.20px #000;z-index:5">10</div>
<div style="position:absolute;left:44.80px;top:428.33px;white-space:pre;font-family:'Liberation Sans',sans-serif;font-size:13.2px;line-height:1;will-change:transform;font-weight:400;font-style:normal;color:#000;transform:scaleX(1.0617);transform-origin:0 0;-webkit-text-stroke:0.20px #000;z-index:5">Backreach</div>
<div style="position:absolute;left:326.68px;top:428.33px;white-space:pre;font-family:'Liberation Sans',sans-serif;font-size:13.2px;line-height:1;will-change:transform;font-weight:400;font-style:normal;color:#000;transform:scaleX(1.0617);transform-origin:0 0;-webkit-text-stroke:0.20px #000;z-index:5">Hatch cover storage</div>
<div style="position:absolute;left:506.30px;top:428.33px;white-space:pre;font-family:'Liberation Sans',sans-serif;font-size:13.2px;line-height:1;will-change:transform;font-weight:400;font-style:normal;color:#000;transform:scaleX(1.0603);transform-origin:0 0;-webkit-text-stroke:0.20px #000;z-index:5">-</div>
<div style="position:absolute;left:266.25px;top:470.53px;white-space:pre;font-family:'Liberation Sans',sans-serif;font-size:13.2px;line-height:1;will-change:transform;font-weight:700;font-style:normal;color:#000;transform:scaleX(1.0201);transform-origin:0 0;-webkit-text-stroke:0.10px #000;z-index:5">Calculations</div>
<div style="position:absolute;left:31.80px;top:491.63px;white-space:pre;font-family:'Liberation Sans',sans-serif;font-size:13.2px;line-height:1;will-change:transform;font-weight:400;font-style:normal;color:#000;transform:scaleX(1.0617);transform-origin:0 0;-webkit-text-stroke:0.20px #000;z-index:5">1</div>
<div style="position:absolute;left:44.80px;top:491.63px;white-space:pre;font-family:'Liberation Sans',sans-serif;font-size:13.2px;line-height:1;will-change:transform;font-weight:400;font-style:normal;color:#000;transform:scaleX(1.0616);transform-origin:0 0;-webkit-text-stroke:0.20px #000;z-index:5">Outreach</div>
<div style="position:absolute;left:375.70px;top:491.63px;white-space:pre;font-family:'Liberation Sans',sans-serif;font-size:13.2px;line-height:1;will-change:transform;font-weight:400;font-style:normal;color:#000;transform:scaleX(1.0615);transform-origin:0 0;-webkit-text-stroke:0.20px #000;z-index:5">38,5</div>
<div style="position:absolute;left:543.71px;top:491.63px;white-space:pre;font-family:'Liberation Sans',sans-serif;font-size:13.2px;line-height:1;will-change:transform;font-weight:400;font-style:normal;color:#000;transform:scaleX(1.0611);transform-origin:0 0;-webkit-text-stroke:0.20px #000;z-index:5">m</div>
<div style="position:absolute;left:31.80px;top:512.23px;white-space:pre;font-family:'Liberation Sans',sans-serif;font-size:13.2px;line-height:1;will-change:transform;font-weight:400;font-style:normal;color:#000;transform:scaleX(1.0617);transform-origin:0 0;-webkit-text-stroke:0.20px #000;z-index:5">2</div>
<div style="position:absolute;left:44.80px;top:512.23px;white-space:pre;font-family:'Liberation Sans',sans-serif;font-size:13.2px;line-height:1;will-change:transform;font-weight:400;font-style:normal;color:#000;transform:scaleX(1.0616);transform-origin:0 0;-webkit-text-stroke:0.20px #000;z-index:5">Lowering height</div>
<div style="position:absolute;left:375.70px;top:512.23px;white-space:pre;font-family:'Liberation Sans',sans-serif;font-size:13.2px;line-height:1;will-change:transform;font-weight:400;font-style:normal;color:#000;transform:scaleX(1.0615);transform-origin:0 0;-webkit-text-stroke:0.20px #000;z-index:5">17,5</div>
<div style="position:absolute;left:543.71px;top:512.23px;white-space:pre;font-family:'Liberation Sans',sans-serif;font-size:13.2px;line-height:1;will-change:transform;font-weight:400;font-style:normal;color:#000;transform:scaleX(1.0611);transform-origin:0 0;-webkit-text-stroke:0.20px #000;z-index:5">m</div>
<div style="position:absolute;left:31.80px;top:532.43px;white-space:pre;font-family:'Liberation Sans',sans-serif;font-size:13.2px;line-height:1;will-change:transform;font-weight:400;font-style:normal;color:#000;transform:scaleX(1.0617);transform-origin:0 0;-webkit-text-stroke:0.20px #000;z-index:5">3</div>
<div style="position:absolute;left:44.80px;top:532.43px;white-space:pre;font-family:'Liberation Sans',sans-serif;font-size:13.2px;line-height:1;will-change:transform;font-weight:400;font-style:normal;color:#000;transform:scaleX(1.0616);transform-origin:0 0;-webkit-text-stroke:0.20px #000;z-index:5">Lifting height</div>
<div style="position:absolute;left:375.70px;top:532.43px;white-space:pre;font-family:'Liberation Sans',sans-serif;font-size:13.2px;line-height:1;will-change:transform;font-weight:400;font-style:normal;color:#000;transform:scaleX(1.0615);transform-origin:0 0;-webkit-text-stroke:0.20px #000;z-index:5">22,2</div>
<div style="position:absolute;left:543.71px;top:532.43px;white-space:pre;font-family:'Liberation Sans',sans-serif;font-size:13.2px;line-height:1;will-change:transform;font-weight:400;font-style:normal;color:#000;transform:scaleX(1.0611);transform-origin:0 0;-webkit-text-stroke:0.20px #000;z-index:5">m</div>
<div style="position:absolute;left:31.80px;top:552.83px;white-space:pre;font-family:'Liberation Sans',sans-serif;font-size:13.2px;line-height:1;will-change:transform;font-weight:400;font-style:normal;color:#000;transform:scaleX(1.0617);transform-origin:0 0;-webkit-text-stroke:0.20px #000;z-index:5">4</div>
<div style="position:absolute;left:44.80px;top:552.83px;white-space:pre;font-family:'Liberation Sans',sans-serif;font-size:13.2px;line-height:1;will-change:transform;font-weight:400;font-style:normal;color:#000;transform:scaleX(1.0615);transform-origin:0 0;-webkit-text-stroke:0.20px #000;z-index:5">Gauge</div>
<div style="position:absolute;left:371.80px;top:552.83px;white-space:pre;font-family:'Liberation Sans',sans-serif;font-size:13.2px;line-height:1;will-change:transform;font-weight:400;font-style:normal;color:#000;transform:scaleX(1.0615);transform-origin:0 0;-webkit-text-stroke:0.20px #000;z-index:5">30.48</div>
<div style="position:absolute;left:543.71px;top:552.83px;white-space:pre;font-family:'Liberation Sans',sans-serif;font-size:13.2px;line-height:1;will-change:transform;font-weight:400;font-style:normal;color:#000;transform:scaleX(1.0611);transform-origin:0 0;-webkit-text-stroke:0.20px #000;z-index:5">m</div>
<div style="position:absolute;left:31.80px;top:573.43px;white-space:pre;font-family:'Liberation Sans',sans-serif;font-size:13.2px;line-height:1;will-change:transform;font-weight:400;font-style:normal;color:#000;transform:scaleX(1.0617);transform-origin:0 0;-webkit-text-stroke:0.20px #000;z-index:5">5</div>
<div style="position:absolute;left:44.80px;top:573.43px;white-space:pre;font-family:'Liberation Sans',sans-serif;font-size:13.2px;line-height:1;will-change:transform;font-weight:400;font-style:normal;color:#000;transform:scaleX(1.0617);transform-origin:0 0;-webkit-text-stroke:0.20px #000;z-index:5">Inner height</div>
<div style="position:absolute;left:379.59px;top:573.43px;white-space:pre;font-family:'Liberation Sans',sans-serif;font-size:13.2px;line-height:1;will-change:transform;font-weight:400;font-style:normal;color:#000;transform:scaleX(1.0613);transform-origin:0 0;-webkit-text-stroke:0.20px #000;z-index:5">5,7</div>
<div style="position:absolute;left:543.71px;top:573.43px;white-space:pre;font-family:'Liberation Sans',sans-serif;font-size:13.2px;line-height:1;will-change:transform;font-weight:400;font-style:normal;color:#000;transform:scaleX(1.0611);transform-origin:0 0;-webkit-text-stroke:0.20px #000;z-index:5">m</div>
<div style="position:absolute;left:31.80px;top:593.83px;white-space:pre;font-family:'Liberation Sans',sans-serif;font-size:13.2px;line-height:1;will-change:transform;font-weight:400;font-style:normal;color:#000;transform:scaleX(1.0617);transform-origin:0 0;-webkit-text-stroke:0.20px #000;z-index:5">6</div>
<div style="position:absolute;left:44.80px;top:593.83px;white-space:pre;font-family:'Liberation Sans',sans-serif;font-size:13.2px;line-height:1;will-change:transform;font-weight:400;font-style:normal;color:#000;transform:scaleX(1.0616);transform-origin:0 0;-webkit-text-stroke:0.20px #000;z-index:5">Backreach road width</div>
<div style="position:absolute;left:379.59px;top:593.83px;white-space:pre;font-family:'Liberation Sans',sans-serif;font-size:13.2px;line-height:1;will-change:transform;font-weight:400;font-style:normal;color:#000;transform:scaleX(1.0613);transform-origin:0 0;-webkit-text-stroke:0.20px #000;z-index:5">0,0</div>
<div style="position:absolute;left:543.71px;top:593.83px;white-space:pre;font-family:'Liberation Sans',sans-serif;font-size:13.2px;line-height:1;will-change:transform;font-weight:400;font-style:normal;color:#000;transform:scaleX(1.0611);transform-origin:0 0;-webkit-text-stroke:0.20px #000;z-index:5">m</div>
<div style="position:absolute;left:31.80px;top:614.83px;white-space:pre;font-family:'Liberation Sans',sans-serif;font-size:13.2px;line-height:1;will-change:transform;font-weight:400;font-style:normal;color:#000;transform:scaleX(1.0617);transform-origin:0 0;-webkit-text-stroke:0.20px #000;z-index:5">7</div>
<div style="position:absolute;left:44.80px;top:614.83px;white-space:pre;font-family:'Liberation Sans',sans-serif;font-size:13.2px;line-height:1;will-change:transform;font-weight:400;font-style:normal;color:#000;transform:scaleX(1.0617);transform-origin:0 0;-webkit-text-stroke:0.20px #000;z-index:5">Backreach</div>
<div style="position:absolute;left:375.70px;top:614.83px;white-space:pre;font-family:'Liberation Sans',sans-serif;font-size:13.2px;line-height:1;will-change:transform;font-weight:400;font-style:normal;color:#000;transform:scaleX(1.0615);transform-origin:0 0;-webkit-text-stroke:0.20px #000;z-index:5">15,0</div>
<div style="position:absolute;left:543.71px;top:614.83px;white-space:pre;font-family:'Liberation Sans',sans-serif;font-size:13.2px;line-height:1;will-change:transform;font-weight:400;font-style:normal;color:#000;transform:scaleX(1.0611);transform-origin:0 0;-webkit-text-stroke:0.20px #000;z-index:5">m</div>
<svg style="position:absolute;left:275.25px;top:281.20px;overflow:visible;" width="6.00" height="6.00" viewBox="0 0 6.00 6.00"><path d="M0 0 H5.2 L0 5.2 Z" fill="#138a2e"/></svg>
<svg style="position:absolute;left:275.25px;top:301.80px;overflow:visible;" width="6.00" height="6.00" viewBox="0 0 6.00 6.00"><path d="M0 0 H5.2 L0 5.2 Z" fill="#138a2e"/></svg>
<svg style="position:absolute;left:275.25px;top:322.30px;overflow:visible;" width="6.00" height="6.00" viewBox="0 0 6.00 6.00"><path d="M0 0 H5.2 L0 5.2 Z" fill="#138a2e"/></svg>
<svg style="position:absolute;left:275.25px;top:342.70px;overflow:visible;" width="6.00" height="6.00" viewBox="0 0 6.00 6.00"><path d="M0 0 H5.2 L0 5.2 Z" fill="#138a2e"/></svg>
<svg style="position:absolute;left:275.25px;top:403.80px;overflow:visible;" width="6.00" height="6.00" viewBox="0 0 6.00 6.00"><path d="M0 0 H5.2 L0 5.2 Z" fill="#138a2e"/></svg>
<div style="position:absolute;left:274.25px;top:609.00px;width:230.35px;height:22.40px;background:transparent;box-sizing:border-box;border:2px solid #1f7145;z-index:3;"></div>
<div style="position:absolute;left:501.60px;top:628.80px;width:5.00px;height:5.00px;background:#1f7145;border:1px solid #fff;z-index:4;"></div>
<svg style="position:absolute;left:0.00px;top:0.00px;overflow:visible;pointer-events:none;" width="1429.00" height="802.00" viewBox="0 0 1429.00 802.00"><path d="M637 331.1 H987 V444.3 L1218 473.6 H637 Z" fill="#d3d3d3"/><rect x="693.5" y="319.4" width="87.5" height="11.7" fill="#fff2cc"/><path d="M693.50 211.00 L693.50 535.00" stroke="#b8b8b8" stroke-width="1.00"/><path d="M782.40 331.00 L782.40 535.00" stroke="#b8b8b8" stroke-width="1.00"/><path d="M963.40 331.00 L963.40 535.00" stroke="#b8b8b8" stroke-width="1.00"/><path d="M986.80 331.00 L986.80 506.00" stroke="#b8b8b8" stroke-width="1.00"/><path d="M998.50 435.00 L998.50 506.00" stroke="#b8b8b8" stroke-width="1.00"/><path d="M1206.90 211.00 L1206.90 535.00" stroke="#b8b8b8" stroke-width="1.00"/><path d="M693.50 532.70 L1206.90 532.70" stroke="#b8b8b8" stroke-width="1.00"/><path d="M963.40 503.20 L1206.90 503.20" stroke="#b8b8b8" stroke-width="1.00"/><path d="M690.50 529.70 L696.50 535.70" stroke="#a8a8a8" stroke-width="1"/><path d="M779.40 529.70 L785.40 535.70" stroke="#a8a8a8" stroke-width="1"/><path d="M960.40 529.70 L966.40 535.70" stroke="#a8a8a8" stroke-width="1"/><path d="M1203.90 529.70 L1209.90 535.70" stroke="#a8a8a8" stroke-width="1"/><path d="M960.40 500.20 L966.40 506.20" stroke="#a8a8a8" stroke-width="1"/><path d="M983.80 500.20 L989.80 506.20" stroke="#a8a8a8" stroke-width="1"/><path d="M995.50 500.20 L1001.50 506.20" stroke="#a8a8a8" stroke-width="1"/><path d="M1203.90 500.20 L1209.90 506.20" stroke="#a8a8a8" stroke-width="1"/><path d="M1206.90 210.50 L1296.00 210.50" stroke="#b8b8b8" stroke-width="1.00"/><path d="M1206.90 331.00 L1296.00 331.00" stroke="#b8b8b8" stroke-width="1.00"/><path d="M963.40 435.00 L998.00 435.00" stroke="#b8b8b8" stroke-width="1.00"/><path d="M1206.90 435.00 L1296.00 435.00" stroke="#b8b8b8" stroke-width="1.00"/><path d="M1295.80 210.50 L1295.80 435.00" stroke="#b8b8b8" stroke-width="1.00"/><path d="M987.00 331.20 L998.00 331.20" stroke="#b8b8b8" stroke-width="1.00"/><path d="M1292.80 207.50 L1298.80 213.50" stroke="#a8a8a8" stroke-width="1"/><path d="M1292.80 328.00 L1298.80 334.00" stroke="#a8a8a8" stroke-width="1"/><path d="M1292.80 432.00 L1298.80 438.00" stroke="#a8a8a8" stroke-width="1"/><path d="M872.40 297.50 L872.40 331.00" stroke="#b8b8b8" stroke-width="1.00"/><path d="M869.40 294.50 L875.40 300.50" stroke="#a8a8a8" stroke-width="1"/><path d="M869.40 328.00 L875.40 334.00" stroke="#a8a8a8" stroke-width="1"/><path d="M693.30 211.20 L1206.70 211.20" fill="none" stroke="#000" stroke-width="3.00" stroke-linejoin="miter" stroke-linecap="butt"/><path d="M782.60 211.00 L963.60 180.80 L1146.20 211.20" fill="none" stroke="#000" stroke-width="3.00" stroke-linejoin="miter" stroke-linecap="butt"/><path d="M782.60 211.00 L782.60 331.00" fill="none" stroke="#000" stroke-width="3.00" stroke-linejoin="miter" stroke-linecap="butt"/><path d="M963.40 180.50 L963.40 331.00" fill="none" stroke="#000" stroke-width="3.00" stroke-linejoin="miter" stroke-linecap="butt"/><path d="M782.60 240.90 L963.40 240.90" fill="none" stroke="#000" stroke-width="3.00" stroke-linejoin="miter" stroke-linecap="butt"/><path d="M963.40 241.80 L782.60 297.30" fill="none" stroke="#000" stroke-width="3.00" stroke-linejoin="miter" stroke-linecap="butt"/><path d="M782.60 297.30 L963.40 297.30" fill="none" stroke="#000" stroke-width="3.00" stroke-linejoin="miter" stroke-linecap="butt"/><rect x="1007.10" y="225.40" width="13.0" height="16.00" fill="#0000cc"/><rect x="1007.10" y="242.42" width="13.0" height="16.00" fill="#0000cc"/><rect x="1007.10" y="259.44" width="13.0" height="16.00" fill="#0000cc"/><rect x="1007.10" y="276.46" width="13.0" height="16.00" fill="#0000cc"/><rect x="1007.10" y="293.48" width="13.0" height="17.02" fill="#0000cc"/><rect x="1007.10" y="323.20" width="13.0" height="16.00" fill="#0000cc"/><rect x="1007.10" y="340.28" width="13.0" height="16.00" fill="#0000cc"/><rect x="1007.10" y="357.36" width="13.0" height="16.00" fill="#0000cc"/><rect x="1007.10" y="374.44" width="13.0" height="16.00" fill="#0000cc"/><rect x="1007.10" y="391.52" width="13.0" height="16.00" fill="#0000cc"/><rect x="1007.10" y="408.60" width="13.0" height="17.08" fill="#0000cc"/><rect x="1021.97" y="225.40" width="13.0" height="16.00" fill="#0000cc"/><rect x="1021.97" y="242.42" width="13.0" height="16.00" fill="#0000cc"/><rect x="1021.97" y="259.44" width="13.0" height="16.00" fill="#0000cc"/><rect x="1021.97" y="276.46" width="13.0" height="16.00" fill="#0000cc"/><rect x="1021.97" y="293.48" width="13.0" height="17.02" fill="#0000cc"/><rect x="1021.97" y="323.20" width="13.0" height="16.00" fill="#0000cc"/><rect x="1021.97" y="340.28" width="13.0" height="16.00" fill="#0000cc"/><rect x="1021.97" y="357.36" width="13.0" height="16.00" fill="#0000cc"/><rect x="1021.97" y="374.44" width="13.0" height="16.00" fill="#0000cc"/><rect x="1021.97" y="391.52" width="13.0" height="16.00" fill="#0000cc"/><rect x="1021.97" y="408.60" width="13.0" height="17.08" fill="#0000cc"/><rect x="1036.84" y="225.40" width="13.0" height="16.00" fill="#0000cc"/><rect x="1036.84" y="242.42" width="13.0" height="16.00" fill="#0000cc"/><rect x="1036.84" y="259.44" width="13.0" height="16.00" fill="#0000cc"/><rect x="1036.84" y="276.46" width="13.0" height="16.00" fill="#0000cc"/><rect x="1036.84" y="293.48" width="13.0" height="17.02" fill="#0000cc"/><rect x="1036.84" y="323.20" width="13.0" height="16.00" fill="#0000cc"/><rect x="1036.84" y="340.28" width="13.0" height="16.00" fill="#0000cc"/><rect x="1036.84" y="357.36" width="13.0" height="16.00" fill="#0000cc"/><rect x="1036.84" y="374.44" width="13.0" height="16.00" fill="#0000cc"/><rect x="1036.84" y="391.52" width="13.0" height="16.00" fill="#0000cc"/><rect x="1036.84" y="408.60" width="13.0" height="17.08" fill="#0000cc"/><rect x="1051.71" y="225.40" width="13.0" height="16.00" fill="#0000cc"/><rect x="1051.71" y="242.42" width="13.0" height="16.00" fill="#0000cc"/><rect x="1051.71" y="259.44" width="13.0" height="16.00" fill="#0000cc"/><rect x="1051.71" y="276.46" width="13.0" height="16.00" fill="#0000cc"/><rect x="1051.71" y="293.48" width="13.0" height="17.02" fill="#0000cc"/><rect x="1051.71" y="323.20" width="13.0" height="16.00" fill="#0000cc"/><rect x="1051.71" y="340.28" width="13.0" height="16.00" fill="#0000cc"/><rect x="1051.71" y="357.36" width="13.0" height="16.00" fill="#0000cc"/><rect x="1051.71" y="374.44" width="13.0" height="16.00" fill="#0000cc"/><rect x="1051.71" y="391.52" width="13.0" height="16.00" fill="#0000cc"/><rect x="1051.71" y="408.60" width="13.0" height="17.08" fill="#0000cc"/><rect x="1066.58" y="225.40" width="13.0" height="16.00" fill="#0000cc"/><rect x="1066.58" y="242.42" width="13.0" height="16.00" fill="#0000cc"/><rect x="1066.58" y="259.44" width="13.0" height="16.00" fill="#0000cc"/><rect x="1066.58" y="276.46" width="13.0" height="16.00" fill="#0000cc"/><rect x="1066.58" y="293.48" width="13.0" height="17.02" fill="#0000cc"/><rect x="1066.58" y="323.20" width="13.0" height="16.00" fill="#0000cc"/><rect x="1066.58" y="340.28" width="13.0" height="16.00" fill="#0000cc"/><rect x="1066.58" y="357.36" width="13.0" height="16.00" fill="#0000cc"/><rect x="1066.58" y="374.44" width="13.0" height="16.00" fill="#0000cc"/><rect x="1066.58" y="391.52" width="13.0" height="16.00" fill="#0000cc"/><rect x="1066.58" y="408.60" width="13.0" height="17.08" fill="#0000cc"/><rect x="1081.45" y="225.40" width="13.0" height="16.00" fill="#0000cc"/><rect x="1081.45" y="242.42" width="13.0" height="16.00" fill="#0000cc"/><rect x="1081.45" y="259.44" width="13.0" height="16.00" fill="#0000cc"/><rect x="1081.45" y="276.46" width="13.0" height="16.00" fill="#0000cc"/><rect x="1081.45" y="293.48" width="13.0" height="17.02" fill="#0000cc"/><rect x="1081.45" y="323.20" width="13.0" height="16.00" fill="#0000cc"/><rect x="1081.45" y="340.28" width="13.0" height="16.00" fill="#0000cc"/><rect x="1081.45" y="357.36" width="13.0" height="16.00" fill="#0000cc"/><rect x="1081.45" y="374.44" width="13.0" height="16.00" fill="#0000cc"/><rect x="1081.45" y="391.52" width="13.0" height="16.00" fill="#0000cc"/><rect x="1081.45" y="408.60" width="13.0" height="17.08" fill="#0000cc"/><rect x="1096.32" y="225.40" width="13.0" height="16.00" fill="#0000cc"/><rect x="1096.32" y="242.42" width="13.0" height="16.00" fill="#0000cc"/><rect x="1096.32" y="259.44" width="13.0" height="16.00" fill="#0000cc"/><rect x="1096.32" y="276.46" width="13.0" height="16.00" fill="#0000cc"/><rect x="1096.32" y="293.48" width="13.0" height="17.02" fill="#0000cc"/><rect x="1096.32" y="323.20" width="13.0" height="16.00" fill="#0000cc"/><rect x="1096.32" y="340.28" width="13.0" height="16.00" fill="#0000cc"/><rect x="1096.32" y="357.36" width="13.0" height="16.00" fill="#0000cc"/><rect x="1096.32" y="374.44" width="13.0" height="16.00" fill="#0000cc"/><rect x="1096.32" y="391.52" width="13.0" height="16.00" fill="#0000cc"/><rect x="1096.32" y="408.60" width="13.0" height="17.08" fill="#0000cc"/><rect x="1111.19" y="225.40" width="13.0" height="16.00" fill="#0000cc"/><rect x="1111.19" y="242.42" width="13.0" height="16.00" fill="#0000cc"/><rect x="1111.19" y="259.44" width="13.0" height="16.00" fill="#0000cc"/><rect x="1111.19" y="276.46" width="13.0" height="16.00" fill="#0000cc"/><rect x="1111.19" y="293.48" width="13.0" height="17.02" fill="#0000cc"/><rect x="1111.19" y="323.20" width="13.0" height="16.00" fill="#0000cc"/><rect x="1111.19" y="340.28" width="13.0" height="16.00" fill="#0000cc"/><rect x="1111.19" y="357.36" width="13.0" height="16.00" fill="#0000cc"/><rect x="1111.19" y="374.44" width="13.0" height="16.00" fill="#0000cc"/><rect x="1111.19" y="391.52" width="13.0" height="16.00" fill="#0000cc"/><rect x="1111.19" y="408.60" width="13.0" height="17.08" fill="#0000cc"/><rect x="1126.06" y="225.40" width="13.0" height="16.00" fill="#0000cc"/><rect x="1126.06" y="242.42" width="13.0" height="16.00" fill="#0000cc"/><rect x="1126.06" y="259.44" width="13.0" height="16.00" fill="#0000cc"/><rect x="1126.06" y="276.46" width="13.0" height="16.00" fill="#0000cc"/><rect x="1126.06" y="293.48" width="13.0" height="17.02" fill="#0000cc"/><rect x="1126.06" y="323.20" width="13.0" height="16.00" fill="#0000cc"/><rect x="1126.06" y="340.28" width="13.0" height="16.00" fill="#0000cc"/><rect x="1126.06" y="357.36" width="13.0" height="16.00" fill="#0000cc"/><rect x="1126.06" y="374.44" width="13.0" height="16.00" fill="#0000cc"/><rect x="1126.06" y="391.52" width="13.0" height="16.00" fill="#0000cc"/><rect x="1126.06" y="408.60" width="13.0" height="17.08" fill="#0000cc"/><rect x="1140.93" y="225.40" width="13.0" height="16.00" fill="#0000cc"/><rect x="1140.93" y="242.42" width="13.0" height="16.00" fill="#0000cc"/><rect x="1140.93" y="259.44" width="13.0" height="16.00" fill="#0000cc"/><rect x="1140.93" y="276.46" width="13.0" height="16.00" fill="#0000cc"/><rect x="1140.93" y="293.48" width="13.0" height="17.02" fill="#0000cc"/><rect x="1140.93" y="323.20" width="13.0" height="16.00" fill="#0000cc"/><rect x="1140.93" y="340.28" width="13.0" height="16.00" fill="#0000cc"/><rect x="1140.93" y="357.36" width="13.0" height="16.00" fill="#0000cc"/><rect x="1140.93" y="374.44" width="13.0" height="16.00" fill="#0000cc"/><rect x="1140.93" y="391.52" width="13.0" height="16.00" fill="#0000cc"/><rect x="1140.93" y="408.60" width="13.0" height="17.08" fill="#0000cc"/><rect x="1155.80" y="225.40" width="13.0" height="16.00" fill="#0000cc"/><rect x="1155.80" y="242.42" width="13.0" height="16.00" fill="#0000cc"/><rect x="1155.80" y="259.44" width="13.0" height="16.00" fill="#0000cc"/><rect x="1155.80" y="276.46" width="13.0" height="16.00" fill="#0000cc"/><rect x="1155.80" y="293.48" width="13.0" height="17.02" fill="#0000cc"/><rect x="1155.80" y="323.20" width="13.0" height="16.00" fill="#0000cc"/><rect x="1155.80" y="340.28" width="13.0" height="16.00" fill="#0000cc"/><rect x="1155.80" y="357.36" width="13.0" height="16.00" fill="#0000cc"/><rect x="1155.80" y="374.44" width="13.0" height="16.00" fill="#0000cc"/><rect x="1155.80" y="391.52" width="13.0" height="16.00" fill="#0000cc"/><rect x="1155.80" y="408.60" width="13.0" height="17.08" fill="#0000cc"/><rect x="1170.67" y="225.40" width="13.0" height="16.00" fill="#0000cc"/><rect x="1170.67" y="242.42" width="13.0" height="16.00" fill="#0000cc"/><rect x="1170.67" y="259.44" width="13.0" height="16.00" fill="#0000cc"/><rect x="1170.67" y="276.46" width="13.0" height="16.00" fill="#0000cc"/><rect x="1170.67" y="293.48" width="13.0" height="17.02" fill="#0000cc"/><rect x="1170.67" y="323.20" width="13.0" height="16.00" fill="#0000cc"/><rect x="1170.67" y="340.28" width="13.0" height="16.00" fill="#0000cc"/><rect x="1170.67" y="357.36" width="13.0" height="16.00" fill="#0000cc"/><rect x="1170.67" y="374.44" width="13.0" height="16.00" fill="#0000cc"/><rect x="1170.67" y="391.52" width="13.0" height="16.00" fill="#0000cc"/><rect x="1170.67" y="408.60" width="13.0" height="17.08" fill="#0000cc"/><rect x="1185.54" y="225.40" width="13.0" height="16.00" fill="#0000cc"/><rect x="1185.54" y="242.42" width="13.0" height="16.00" fill="#0000cc"/><rect x="1185.54" y="259.44" width="13.0" height="16.00" fill="#0000cc"/><rect x="1185.54" y="276.46" width="13.0" height="16.00" fill="#0000cc"/><rect x="1185.54" y="293.48" width="13.0" height="17.02" fill="#0000cc"/><rect x="1185.54" y="323.20" width="13.0" height="16.00" fill="#0000cc"/><rect x="1185.54" y="340.28" width="13.0" height="16.00" fill="#0000cc"/><rect x="1185.54" y="357.36" width="13.0" height="16.00" fill="#0000cc"/><rect x="1185.54" y="374.44" width="13.0" height="16.00" fill="#0000cc"/><rect x="1185.54" y="391.52" width="13.0" height="16.00" fill="#0000cc"/><rect x="1185.54" y="408.60" width="13.0" height="17.08" fill="#0000cc"/><rect x="1007.1" y="241.42" width="191.2" height="1" fill="#9a9af0"/><rect x="1007.1" y="258.44" width="191.2" height="1" fill="#9a9af0"/><rect x="1007.1" y="275.46" width="191.2" height="1" fill="#9a9af0"/><rect x="1007.1" y="292.48" width="191.2" height="1" fill="#9a9af0"/><rect x="1007.1" y="339.28" width="191.2" height="1" fill="#9a9af0"/><rect x="1007.1" y="356.36" width="191.2" height="1" fill="#9a9af0"/><rect x="1007.1" y="373.44" width="191.2" height="1" fill="#9a9af0"/><rect x="1007.1" y="390.52" width="191.2" height="1" fill="#9a9af0"/><rect x="1007.1" y="407.60" width="191.2" height="1" fill="#9a9af0"/><rect x="998.9" y="311.3" width="207.5" height="10.9" fill="#d1d1d1"/><path d="M998.8 314.5 V434.6 H1206.4 V314.5" fill="none" stroke="#3a3a3a" stroke-width="2.8"/></svg>
<div style="position:absolute;left:875.50px;top:309.94px;white-space:pre;font-family:'Liberation Sans',sans-serif;font-size:12px;line-height:1;will-change:transform;font-weight:700;font-style:normal;color:#222;transform:scaleX(0.9708);transform-origin:0 0;z-index:5">5.7</div>
<div style="position:absolute;left:1298.00px;top:267.54px;white-space:pre;font-family:'Liberation Sans',sans-serif;font-size:12px;line-height:1;will-change:transform;font-weight:700;font-style:normal;color:#222;transform:scaleX(1.0060);transform-origin:0 0;z-index:5">20.2</div>
<div style="position:absolute;left:1298.00px;top:378.74px;white-space:pre;font-family:'Liberation Sans',sans-serif;font-size:12px;line-height:1;will-change:transform;font-weight:700;font-style:normal;color:#222;transform:scaleX(1.0060);transform-origin:0 0;z-index:5">17.5</div>
<div style="position:absolute;left:972.00px;top:487.14px;white-space:pre;font-family:'Liberation Sans',sans-serif;font-size:12px;line-height:1;will-change:transform;font-weight:700;font-style:normal;color:#222;transform:scaleX(0.8972);transform-origin:0 0;z-index:5">4</div>
<div style="position:absolute;left:990.20px;top:487.14px;white-space:pre;font-family:'Liberation Sans',sans-serif;font-size:12px;line-height:1;will-change:transform;font-weight:700;font-style:normal;color:#222;transform:scaleX(0.8673);transform-origin:0 0;z-index:5">2</div>
<div style="position:absolute;left:1100.60px;top:487.14px;white-space:pre;font-family:'Liberation Sans',sans-serif;font-size:12px;line-height:1;will-change:transform;font-weight:700;font-style:normal;color:#222;transform:scaleX(0.9375);transform-origin:0 0;z-index:5">15.5</div>
<div style="position:absolute;left:734.70px;top:516.84px;white-space:pre;font-family:'Liberation Sans',sans-serif;font-size:12px;line-height:1;will-change:transform;font-weight:700;font-style:normal;color:#222;transform:scaleX(0.9207);transform-origin:0 0;z-index:5">15</div>
<div style="position:absolute;left:869.60px;top:516.64px;white-space:pre;font-family:'Liberation Sans',sans-serif;font-size:12px;line-height:1;will-change:transform;font-weight:700;font-style:normal;color:#222;transform:scaleX(0.9790);transform-origin:0 0;z-index:5">30.48</div>
<div style="position:absolute;left:1081.20px;top:516.64px;white-space:pre;font-family:'Liberation Sans',sans-serif;font-size:12px;line-height:1;will-change:transform;font-weight:700;font-style:normal;color:#222;transform:scaleX(0.8833);transform-origin:0 0;z-index:5">41</div>
<div style="position:absolute;left:0.00px;top:751.20px;width:1429.00px;height:26.00px;background:#efefef;"></div>
<div style="position:absolute;left:0.00px;top:751.20px;width:1429.00px;height:1.00px;background:#dcdcdc;"></div>
<svg style="position:absolute;left:10.50px;top:758.50px;overflow:visible;" width="7.00" height="11.00" viewBox="0 0 7.00 11.00"><path d="M6.5 0.5 V10.5 L0.5 5.5 Z" fill="#b9b9b9"/></svg>
<svg style="position:absolute;left:34.50px;top:758.50px;overflow:visible;" width="7.00" height="11.00" viewBox="0 0 7.00 11.00"><path d="M0.5 0.5 V10.5 L6.5 5.5 Z" fill="#b9b9b9"/></svg>
<div style="position:absolute;left:56.80px;top:751.20px;width:82.20px;height:22.80px;background:#ffffff;box-sizing:border-box;border-left:1px solid #d6d6d6;border-right:1px solid #d6d6d6;border-bottom:1.5px solid #c9c9c9;border-radius:0 0 3px 3px;"></div>
<div style="position:absolute;left:73.25px;top:758.14px;white-space:pre;font-family:'Liberation Sans',sans-serif;font-size:12px;line-height:1;will-change:transform;font-weight:700;font-style:normal;color:#1e7e45;transform:scaleX(0.9894);transform-origin:0 0;z-index:5">Interface</div>
<div style="position:absolute;left:165.10px;top:758.14px;white-space:pre;font-family:'Liberation Sans',sans-serif;font-size:12px;line-height:1;will-change:transform;font-weight:400;font-style:normal;color:#555555;transform:scaleX(0.9858);transform-origin:0 0;-webkit-text-stroke:0.25px #555555;z-index:5">Data</div>
<div style="position:absolute;left:216.30px;top:752.00px;width:1.00px;height:20.00px;background:#d6d6d6;"></div>
<svg style="position:absolute;left:229.50px;top:758.00px;overflow:visible;" width="11.50" height="11.50" viewBox="0 0 11.50 11.50"><path d="M5.75 0.5 V11 M0.5 5.75 H11" stroke="#333" stroke-width="1.9"/></svg>
<div style="position:absolute;left:253.50px;top:752.00px;width:1.00px;height:20.00px;background:#d6d6d6;"></div>
<div style="position:absolute;left:0.00px;top:776.60px;width:1429.00px;height:1.20px;background:#d3d3d3;"></div>
<div style="position:absolute;left:0.00px;top:777.80px;width:1429.00px;height:24.20px;background:#f3f3f3;"></div>
<div style="position:absolute;left:22.00px;top:784.84px;white-space:pre;font-family:'Liberation Sans',sans-serif;font-size:12px;line-height:1;will-change:transform;font-weight:400;font-style:normal;color:#6b6b6b;transform:scaleX(1.0118);transform-origin:0 0;-webkit-text-stroke:0.25px #6b6b6b;z-index:5">Готово</div>
<svg style="position:absolute;left:0.00px;top:0.00px;overflow:visible;" width="1429.00" height="802.00" viewBox="0 0 1429.00 802.00"><circle cx="87.7" cy="790.1" r="6.9" fill="none" stroke="#5c5c5c" stroke-width="1.2"/><circle cx="87.7" cy="790.1" r="4.3" fill="#555"/><circle cx="122.6" cy="784.8" r="1.6" fill="none" stroke="#555" stroke-width="1"/><path d="M116.8 785.6 Q117.6 788 120.6 787.4 L120.8 791 Q120.2 794.5 118.6 797.2 Q119.4 798 120.2 797.3 Q122.2 793.8 122.6 791.4 L124.6 791.4 M124.5 787.4 Q127.4 787.8 128.2 785.6" fill="none" stroke="#555" stroke-width="1.05" stroke-linecap="round" stroke-linejoin="round"/><circle cx="126.2" cy="794.3" r="3.9" fill="#555"/><path d="M124.4 794.4 L125.7 795.7 L128 793" fill="none" stroke="#fff" stroke-width="1"/></svg>
<div style="position:absolute;left:137.00px;top:784.84px;white-space:pre;font-family:'Liberation Sans',sans-serif;font-size:12px;line-height:1;will-change:transform;font-weight:400;font-style:normal;color:#5f5f5f;transform:scaleX(1.0333);transform-origin:0 0;-webkit-text-stroke:0.25px #5f5f5f;z-index:5">Специальные возможности: все в порядке</div>
<div style="position:absolute;left:1123.00px;top:780.00px;width:30.50px;height:20.80px;background:#c8c8c8;border-radius:3px;"></div>
<svg style="position:absolute;left:1130.50px;top:783.00px;overflow:visible;" width="15.50" height="14.50" viewBox="0 0 15.50 14.50"><rect x="1.0" y="0.8" width="4.3" height="4" rx="0.8" fill="#303030"/><rect x="1.0" y="5.3" width="4.3" height="4" rx="0.8" fill="#303030"/><rect x="1.0" y="9.8" width="4.3" height="4" rx="0.8" fill="#303030"/><rect x="5.9" y="0.8" width="4.3" height="4" rx="0.8" fill="#303030"/><rect x="5.9" y="5.3" width="4.3" height="4" rx="0.8" fill="#303030"/><rect x="5.9" y="9.8" width="4.3" height="4" rx="0.8" fill="#303030"/><rect x="10.8" y="0.8" width="4.3" height="4" rx="0.8" fill="#303030"/><rect x="10.8" y="5.3" width="4.3" height="4" rx="0.8" fill="#303030"/><rect x="10.8" y="9.8" width="4.3" height="4" rx="0.8" fill="#303030"/></svg>
<svg style="position:absolute;left:1167.00px;top:782.00px;overflow:visible;" width="14.00" height="16.50" viewBox="0 0 14.00 16.50"><path d="M1 2 Q1 0.7 2.3 0.7 H8.5 L12.8 5 V14.5 Q12.8 15.8 11.5 15.8 H2.3 Q1 15.8 1 14.5 Z" fill="none" stroke="#555" stroke-width="1.1"/><rect x="3.7" y="8.3" width="6.5" height="5" rx="0.6" fill="none" stroke="#555" stroke-width="1"/><path d="M3.7 10.8 H10.2 M6.4 8.3 V13.3" stroke="#555" stroke-width="0.8"/></svg>
<svg style="position:absolute;left:1201.00px;top:782.00px;overflow:visible;" width="16.50" height="16.50" viewBox="0 0 16.50 16.50"><path d="M2 0.5 V4.5 H14.5 V0.5 M2 16 V12 H14.5 V16" fill="none" stroke="#555" stroke-width="1.2"/><path d="M0.5 8.2 H16" stroke="#555" stroke-width="1.1" stroke-dasharray="1.6 1"/></svg>
<div style="position:absolute;left:1233.00px;top:789.60px;width:8.30px;height:1.30px;background:#666;"></div>
<div style="position:absolute;left:1248.00px;top:788.50px;width:96.80px;height:4.00px;background:#b3b3b3;border-radius:2px;"></div>
<div style="position:absolute;left:1248.00px;top:788.50px;width:40.00px;height:4.00px;background:#a3a3a3;border-radius:2px;"></div>
<div style="position:absolute;left:1281.00px;top:783.00px;width:14.00px;height:14.00px;background:#ffffff;border-radius:50%;box-shadow:0 0.5px 2px rgba(0,0,0,0.35);"></div>
<svg style="position:absolute;left:1351.50px;top:786.00px;overflow:visible;" width="9.00" height="9.00" viewBox="0 0 9.00 9.00"><path d="M4.5 0 V9 M0 4.5 H9" stroke="#666" stroke-width="1.3"/></svg>
<div style="position:absolute;left:1376.70px;top:784.44px;white-space:pre;font-family:'Liberation Sans',sans-serif;font-size:12px;line-height:1;will-change:transform;font-weight:400;font-style:normal;color:#6b6b6b;transform:scaleX(1.0344);transform-origin:0 0;-webkit-text-stroke:0.25px #6b6b6b;z-index:5">82 %</div>
<svg style="position:absolute;left:580.00px;top:760.00px;overflow:visible;z-index:8;" width="131.00" height="40.00" viewBox="0 0 131.00 40.00"><defs><filter id="sh" x="-10%" y="-20%" width="120%" height="150%"><feDropShadow dx="0" dy="0.6" stdDeviation="0.8" flood-color="#000" flood-opacity="0.22"/></filter></defs><path d="M8.6 2.6 H122.5 Q127.5 2.6 127.5 7.6 V23.6 Q127.5 28.6 122.5 28.6 H72.9 L65 37 L58.2 28.6 H8.6 Q3.6 28.6 3.6 23.6 V7.6 Q3.6 2.6 8.6 2.6 Z" fill="#ebebeb" stroke="#cfcfcf" stroke-width="0.8" filter="url(#sh)"/></svg>
<div style="position:absolute;left:597.50px;top:769.40px;white-space:pre;font-family:'Liberation Sans',sans-serif;font-size:13px;line-height:1;will-change:transform;font-weight:400;font-style:normal;color:#2b2b2b;transform:scaleX(1.0756);transform-origin:0 0;-webkit-text-stroke:0.25px #2b2b2b;z-index:9">Microsoft Excel</div>
<svg style="position:absolute;left:0.00px;top:0.00px;overflow:visible;z-index:20;" width="5.00" height="5.00" viewBox="0 0 5.00 5.00"><path d="M0 0 H4.5 Q0 0 0 4.5 Z" fill="#1b1410"/></svg>
<svg style="position:absolute;left:1424.00px;top:0.00px;overflow:visible;z-index:20;" width="5.00" height="5.00" viewBox="0 0 5.00 5.00"><path d="M5 0 H0.5 Q5 0 5 4.5 Z" fill="#1b1410"/></svg>
<svg style="position:absolute;left:0.00px;top:797.00px;overflow:visible;z-index:20;" width="5.00" height="5.00" viewBox="0 0 5.00 5.00"><path d="M0 5 H4.5 Q0 5 0 0.5 Z" fill="#1b1410"/></svg>
<svg style="position:absolute;left:1419.00px;top:792.00px;overflow:visible;z-index:20;" width="10.00" height="10.00" viewBox="0 0 10.00 10.00"><path d="M10 10 H0 Q9 9.5 10 0 Z" fill="#1b1410"/></svg>
</body></html>
